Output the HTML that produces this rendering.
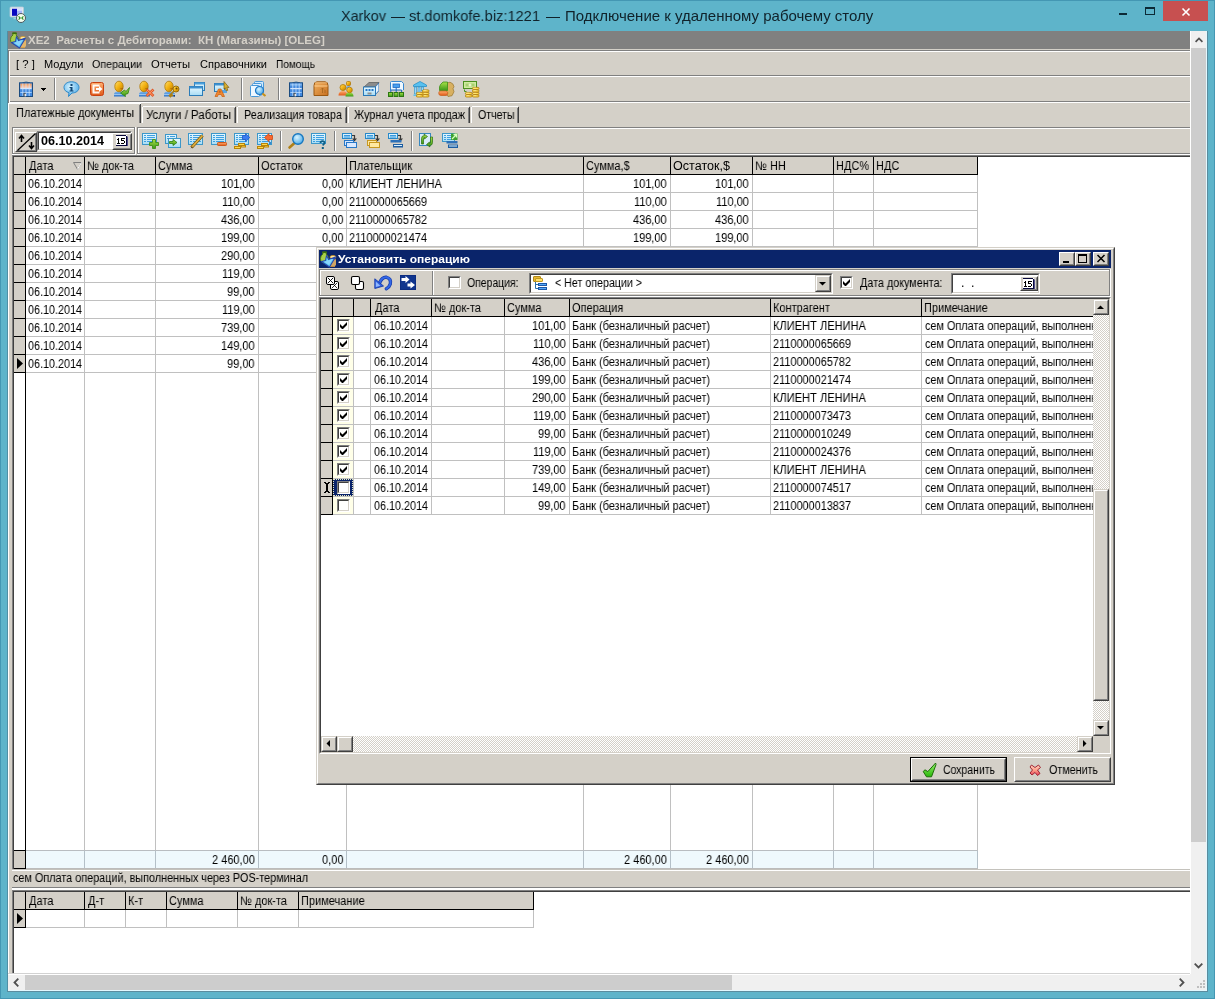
<!DOCTYPE html>
<html><head><meta charset="utf-8"><title>Xarkov</title>
<style>
html,body{margin:0;padding:0;}
body{width:1215px;height:999px;overflow:hidden;position:relative;background:#5eb4ca;font-family:"Liberation Sans",sans-serif;}
.a{position:absolute;}
.t{white-space:pre;will-change:transform;}
svg{display:block;overflow:visible}
</style></head><body>
<div class="a" style="left:0;top:0;width:1215px;height:999px;background:#5eb4ca"></div>
<div class="a " style="left:0px;top:0px;width:1px;height:999px;background:#4497b3;"></div>
<div class="a " style="left:1214px;top:0px;width:1px;height:999px;background:#4497b3;"></div>
<div class="a " style="left:0px;top:0px;width:1215px;height:1px;background:#4497b3;"></div>
<div class="a " style="left:0px;top:998px;width:1215px;height:1px;background:#4497b3;"></div>
<div class="a t" style="top:5.5px;height:20px;line-height:20px;font-size:15px;color:#10222a;left:341px;transform:scaleX(0.9639);transform-origin:0 0;">Xarkov</div>
<div class="a t" style="top:5.5px;height:20px;line-height:20px;font-size:15px;color:#10222a;left:390.5px;transform:scaleX(0.9000);transform-origin:0 0;">—</div>
<div class="a t" style="top:5.5px;height:20px;line-height:20px;font-size:15px;color:#10222a;left:409px;transform:scaleX(0.9756);transform-origin:0 0;">st.domkofe.biz:1221</div>
<div class="a t" style="top:5.5px;height:20px;line-height:20px;font-size:15px;color:#10222a;left:545.5px;transform:scaleX(0.9333);transform-origin:0 0;">—</div>
<div class="a t" style="top:5.5px;height:20px;line-height:20px;font-size:15px;color:#10222a;left:564.5px;">Подключение к удаленному рабочему столу</div>
<div class="a " style="left:1119px;top:13px;width:8px;height:2px;background:#0c2a36;"></div>
<div class="a " style="left:1145px;top:7px;width:10px;height:8px;border:1px solid #0c2a36;border-top-width:2px;box-sizing:border-box;"></div>
<div class="a " style="left:1163px;top:1px;width:45px;height:20px;background:#c75050;"></div>
<svg class="a" style="left:1182px;top:8px" width="8" height="8" viewBox="0 0 8 8"><path d="M0.5 0.5L7.5 7.5M7.5 0.5L0.5 7.5" stroke="#fff" stroke-width="1.6" fill="none"/></svg>
<svg class="a" style="left:9px;top:6px" width="18" height="18" viewBox="0 0 18 18"><rect x="1" y="1" width="13.500" height="10" rx="1" fill="#dfe8f0" stroke="#b8ccd8" stroke-width=".8"/><rect x="3" y="2.800" width="5" height="7" fill="#0808c0"/><rect x="8" y="2.800" width="5" height="7" fill="#a8b8f8"/><path d="M8 2.800h5v2h-5z" fill="#d8e0ff"/><path d="M4.500 12.500h4" stroke="#9cd0e0" stroke-width="1.500"/><circle cx="12" cy="12" r="4.500" fill="#f4fff0" stroke="#404850" stroke-width=".9"/><path d="M9.600 10.400l1.600 1.600-1.600 1.600M14.400 10.400l-1.600 1.600 1.600 1.600" stroke="#2c8c20" stroke-width="1.100" fill="none"/></svg>
<svg class="a" width="0" height="0" style="left:0;top:0"><defs>
<linearGradient id="gGold" x1="0" y1="0" x2="1" y2="1"><stop offset="0" stop-color="#ffe070"/><stop offset="0.5" stop-color="#f2b010"/><stop offset="1" stop-color="#b87800"/></linearGradient>
<linearGradient id="gBlue" x1="0" y1="0" x2="0" y2="1"><stop offset="0" stop-color="#7db8f0"/><stop offset="1" stop-color="#2f74c8"/></linearGradient>
<linearGradient id="gSky" x1="0" y1="0" x2="0" y2="1"><stop offset="0" stop-color="#e8f8ff"/><stop offset="1" stop-color="#a8dcf4"/></linearGradient>
<linearGradient id="gGreen" x1="0" y1="0" x2="0" y2="1"><stop offset="0" stop-color="#a8e048"/><stop offset="1" stop-color="#3c9818"/></linearGradient>
<linearGradient id="gOr" x1="0" y1="0" x2="0" y2="1"><stop offset="0" stop-color="#ffb070"/><stop offset="1" stop-color="#e05818"/></linearGradient>
<linearGradient id="gBox" x1="0" y1="0" x2="1" y2="1"><stop offset="0" stop-color="#f0b060"/><stop offset="1" stop-color="#c87020"/></linearGradient>
<linearGradient id="gBld" x1="0" y1="0" x2="0" y2="1"><stop offset="0" stop-color="#4a8cdc"/><stop offset="1" stop-color="#3f88e0"/></linearGradient><linearGradient id="gBldO" x1="0" y1="0" x2="0" y2="1"><stop offset="0" stop-color="#f09858"/><stop offset="1" stop-color="#f8d0c0"/></linearGradient><radialGradient id="gLens" cx="0.4" cy="0.35" r="0.7"><stop offset="0" stop-color="#d8f4ff"/><stop offset="1" stop-color="#48a8e8"/></radialGradient>
<linearGradient id="gChk" x1="0" y1="0" x2="0" y2="1"><stop offset="0" stop-color="#98f070"/><stop offset="1" stop-color="#28b808"/></linearGradient><linearGradient id="gX" x1="0" y1="0" x2="0" y2="1"><stop offset="0" stop-color="#ffd0c0"/><stop offset=".5" stop-color="#ffa088"/><stop offset="1" stop-color="#e03858"/></linearGradient></defs></svg>
<div class="a" id="desk" style="left:8px;top:31px;width:1182px;height:943px;background:#fff;overflow:hidden">
<div class="a " style="left:0px;top:0px;width:1182px;height:18px;background:#808080;"></div>
<div class="a t" style="top:2px;height:15px;line-height:15px;font-size:11px;color:#d4d0c8;font-weight:bold;left:20px;transform:scaleX(1.0470);transform-origin:0 0;">XE2  Расчеты с Дебиторами:  КН (Магазины) [OLEG]</div>
<svg class="a" style="left:2px;top:1px" width="16" height="16" viewBox="0 0 16 16"><path d="M2.500 1h4l-.5 2q2.500 1.500 2.500 5T5 12Q0.500 12 0.500 7.500 0.500 4.500 3 3z" fill="#a8d048" stroke="#4c7c10" stroke-width=".9"/><path d="M2.500 1.200h4" stroke="#386808" stroke-width="1.400"/><ellipse cx="13" cy="6" rx="3" ry="1.600" fill="#ffe9a0" stroke="#d89820" stroke-width=".7"/><path d="M10 9h6M10 11h6M10 13h6M10 15h5" stroke="#f0a838" stroke-width="1.300"/><path d="M10 10h6M10 12h6M10 14h6" stroke="#ffe0a0" stroke-width=".7"/><path d="M6.500 4.500L8.500 8.500 15.500 6 9.500 16 1.500 10.500 5.500 9.500z" fill="#58c8f0" stroke="#2848b0" stroke-width="1.100" stroke-linejoin="round"/><path d="M6.800 6.500L8 9.500 13 7.800 9 14 4 10.800 7 10z" fill="#a0d8ff" opacity=".7"/></svg>
<div class="a " style="left:0px;top:18px;width:1182px;height:106px;background:#d4d0c8;"></div>
<div class="a " style="left:0px;top:19px;width:1182px;height:1px;background:#808080;"></div>
<div class="a " style="left:0px;top:20px;width:1182px;height:1px;background:#ffffff;"></div>
<div class="a " style="left:0px;top:44px;width:1182px;height:1px;background:#808080;"></div>
<div class="a " style="left:0px;top:45px;width:1182px;height:1px;background:#ffffff;"></div>
<div class="a t" style="top:26px;height:14px;line-height:14px;font-size:11px;color:#000;left:8px;transform:scaleX(1.0340);transform-origin:0 0;">[ ? ]</div>
<div class="a t" style="top:26px;height:14px;line-height:14px;font-size:11px;color:#000;left:35.5px;transform:scaleX(0.9893);transform-origin:0 0;">Модули</div>
<div class="a t" style="top:26px;height:14px;line-height:14px;font-size:11px;color:#000;left:83.5px;transform:scaleX(0.9715);transform-origin:0 0;">Операции</div>
<div class="a t" style="top:26px;height:14px;line-height:14px;font-size:11px;color:#000;left:143px;transform:scaleX(1.0255);transform-origin:0 0;">Отчеты</div>
<div class="a t" style="top:26px;height:14px;line-height:14px;font-size:11px;color:#000;left:191.5px;transform:scaleX(1.0052);transform-origin:0 0;">Справочники</div>
<div class="a t" style="top:26px;height:14px;line-height:14px;font-size:11px;color:#000;left:268px;transform:scaleX(0.9176);transform-origin:0 0;">Помощь</div>
<div class="a " style="left:0px;top:70px;width:1182px;height:1px;background:#808080;"></div>
<div class="a " style="left:0px;top:71px;width:1182px;height:1px;background:#ffffff;"></div>
<div class="a " style="left:1px;top:21px;width:1px;height:23px;background:#ffffff;"></div>
<div class="a " style="left:1px;top:46px;width:1px;height:24px;background:#ffffff;"></div>
<div class="a " style="left:46px;top:47px;width:1px;height:22px;background:#808080;"></div>
<div class="a " style="left:47px;top:47px;width:1px;height:22px;background:#ffffff;"></div>
<div class="a " style="left:233px;top:47px;width:1px;height:22px;background:#808080;"></div>
<div class="a " style="left:234px;top:47px;width:1px;height:22px;background:#ffffff;"></div>
<div class="a " style="left:270px;top:47px;width:1px;height:22px;background:#808080;"></div>
<div class="a " style="left:271px;top:47px;width:1px;height:22px;background:#ffffff;"></div>
<div class="a " style="left:33px;top:57px;width:5px;height:1px;background:#000;"></div>
<div class="a " style="left:34px;top:58px;width:3px;height:1px;background:#000;"></div>
<div class="a " style="left:35px;top:59px;width:1px;height:1px;background:#000;"></div>
<svg class="a" style="left:10px;top:50px" width="16" height="16" viewBox="0 0 16 16"><rect x="1" y="1" width="14" height="15" rx="1" fill="#bfe4f8" opacity=".7"/><path d="M4.500 1.800Q8 0.200 12 1.800" stroke="#3c6c98" stroke-width="1" fill="none"/><rect x="1.500" y="1.800" width="13" height="13.700" fill="url(#gBld)" stroke="#1c4c80"/><rect x="2.300" y="2.600" width="11.400" height="4.400" fill="url(#gBldO)"/><rect x="2.300" y="7" width="11.400" height="1.200" fill="#eef4ff" opacity=".85"/><rect x="2.300" y="11" width="11.400" height="1" fill="#b8dcff" opacity=".8"/><path d="M4.800 2.500v12.500M8 2.500v12.500M11.200 2.500v12.500" stroke="#cfe6ff" stroke-width=".9" opacity=".8"/><rect x="5.400" y="11.800" width="2.200" height="3.500" fill="#505860"/><rect x="6.600" y="13" width="1.400" height="2.300" fill="#e8e8e8"/></svg><svg class="a" style="left:55px;top:50px" width="16" height="16" viewBox="0 0 16 16"><path d="M8.5 0.8C13 0.8 16 3.3 16 6.5S13 12 9 12L5.5 15.5 6 11.6C3 11 1 9 1 6.5 1 3.3 4 0.8 8.5 0.8z" fill="url(#gLens)" stroke="#2c88c8" stroke-width="1"/><rect x="7.5" y="3" width="2" height="2" fill="#104878"/><path d="M6.5 6h3v3.5h1v1h-4v-1h1v-2.5h-1z" fill="#104878"/></svg><svg class="a" style="left:80px;top:50px" width="16" height="16" viewBox="0 0 16 16"><rect x="2.5" y="1.5" width="13" height="13" rx="2" fill="url(#gOr)" stroke="#c84010"/><path d="M4.5 3.5h7v2h-5v5h5v2h-7z" fill="#fff" opacity=".95"/><path d="M8 7h3V5l3.5 3L11 11V9H8z" fill="#fff"/></svg><svg class="a" style="left:105px;top:50px" width="17" height="16" viewBox="0 0 17 16"><path d="M1 15.5v-2q0-3 4-3h3q4 0 4 3v2z" fill="url(#gBlue)"/><path d="M1 13h11v1h-11z" fill="#b8d8f8" opacity=".7"/><ellipse cx="6" cy="5.5" rx="4.2" ry="5.3" fill="url(#gGold)" stroke="#b07808" stroke-width="0.8"/><path d="M7.5 7.5q1.5 1 2.5 -.5" stroke="#a05800" stroke-width=".8" fill="none"/><path d="M16.5 6.5L13 10.5 11.5 9 7.5 12 12.5 15.5 12 13.5 15 12.5z" fill="url(#gGreen)" stroke="#2c8010" stroke-width=".8"/></svg><svg class="a" style="left:130px;top:50px" width="17" height="16" viewBox="0 0 17 16"><path d="M1 15.5v-2q0-3 4-3h3q4 0 4 3v2z" fill="url(#gBlue)"/><path d="M1 13h11v1h-11z" fill="#b8d8f8" opacity=".7"/><ellipse cx="6" cy="5.5" rx="4.2" ry="5.3" fill="url(#gGold)" stroke="#b07808" stroke-width="0.8"/><path d="M7.5 7.5q1.5 1 2.5 -.5" stroke="#a05800" stroke-width=".8" fill="none"/><path d="M8.5 8.5L15.5 15M15.5 8.5L8.5 15" stroke="#e05828" stroke-width="2.6"/><path d="M9 9L15 14.5M15 9L9 14.5" stroke="#ff9a68" stroke-width="1"/></svg><svg class="a" style="left:155px;top:50px" width="17" height="16" viewBox="0 0 17 16"><path d="M1 15.5v-2q0-3 4-3h3q4 0 4 3v2z" fill="url(#gBlue)"/><path d="M1 13h11v1h-11z" fill="#b8d8f8" opacity=".7"/><ellipse cx="6" cy="5.5" rx="4.2" ry="5.3" fill="url(#gGold)" stroke="#b07808" stroke-width="0.8"/><path d="M7.5 7.5q1.5 1 2.5 -.5" stroke="#a05800" stroke-width=".8" fill="none"/><circle cx="13" cy="8" r="3" fill="url(#gGold)" stroke="#98700c"/><circle cx="13.5" cy="7.5" r="1" fill="#6a4a00"/><path d="M11 10L6.5 14.5l1 1L9 14l1 1" stroke="#b08010" stroke-width="1.6" fill="none"/><rect x="10.5" y="14" width="1.5" height="1.5" fill="#183878"/></svg><svg class="a" style="left:180px;top:50px" width="18" height="16" viewBox="0 0 18 16"><rect x="6.5" y="1.5" width="10" height="8" fill="url(#gSky)" stroke="#2c7cb8"/><rect x="6.5" y="1.5" width="10" height="2" fill="#4aa0dc"/><rect x="1.5" y="5.5" width="13" height="9" fill="url(#gSky)" stroke="#2c7cb8"/><rect x="1.5" y="5.5" width="13" height="2" fill="#3c90d0"/></svg><svg class="a" style="left:205px;top:50px" width="17" height="16" viewBox="0 0 17 16"><rect x="1.5" y="2.5" width="10" height="8" fill="url(#gSky)" stroke="#2c7cb8"/><rect x="1.5" y="2.5" width="10" height="2" fill="#3c90d0"/><rect x="9" y="9" width="5" height="3" fill="#58a8e8"/><path d="M2 15.5L5.5 8h2.5L11.5 15.5H9L8.3 13.5H5.2L4.5 15.5zM6 11.5h1.6L6.8 9.5z" fill="#f08830" stroke="#c85c10" stroke-width=".7"/><path d="M11 0.5L16 6.5 13.8 6.3 14.8 9.3 13.2 9.8 12.2 6.8 11 8z" fill="#d8b030" stroke="#806010" stroke-width=".7"/></svg><svg class="a" style="left:242px;top:50px" width="16" height="16" viewBox="0 0 16 16"><rect x="4.500" y="0.5" width="9" height="12" rx="1" fill="#cfeaff" stroke="#4898d8"/><rect x="2.500" y="2.500" width="9" height="12" rx="1" fill="#dff0ff" stroke="#4898d8"/><rect x="0.500" y="4.500" width="9" height="11" rx="1" fill="#eef8ff" stroke="#4898d8"/><circle cx="9.5" cy="9.5" r="4" fill="url(#gLens)" stroke="#1c78c8" stroke-width="1.2"/><path d="M12.5 12.5L15.5 15" stroke="#c89018" stroke-width="2"/></svg><svg class="a" style="left:280px;top:50px" width="16" height="16" viewBox="0 0 16 16"><rect x="1" y="1" width="14" height="15" rx="1" fill="#bfe4f8" opacity=".7"/><path d="M4.500 1.800Q8 0.200 12 1.800" stroke="#3c6c98" stroke-width="1" fill="none"/><rect x="1.500" y="1.800" width="13" height="13.700" fill="url(#gBld)" stroke="#1c4c80"/><rect x="2.300" y="2.600" width="11.400" height="2" fill="#8cc0f4" opacity=".8"/><rect x="2.300" y="7" width="11.400" height="1.200" fill="#eef4ff" opacity=".85"/><rect x="2.300" y="11" width="11.400" height="1" fill="#b8dcff" opacity=".8"/><path d="M4.800 2.500v12.500M8 2.500v12.500M11.200 2.500v12.500" stroke="#cfe6ff" stroke-width=".9" opacity=".8"/><rect x="5.400" y="11.800" width="2.200" height="3.500" fill="#505860"/><rect x="6.600" y="13" width="1.400" height="2.300" fill="#e8e8e8"/></svg><svg class="a" style="left:305px;top:50px" width="16" height="16" viewBox="0 0 16 16"><path d="M1 4.5Q1 0.8 4 0.8H12Q15 0.8 15 4.5V14.5H1z" fill="url(#gBox)" stroke="#9c5810"/><path d="M1.500 5h13" stroke="#ffd090" stroke-width="1"/><path d="M2 1.800h12" stroke="#ffd8a0" stroke-width="1" opacity=".6"/><path d="M9.500 7v5M8 8.500l1.500-1.500 1.500 1.500M12 9v3" stroke="#a86820" stroke-width=".9" fill="none"/></svg><svg class="a" style="left:330px;top:50px" width="16" height="16" viewBox="0 0 16 16"><rect x="8.5" y="0.5" width="4" height="4" rx="1" fill="url(#gGold)" stroke="#b07808" stroke-width=".8"/><path d="M8 7.500q0-2.500 2.500-2.500t2.500 2.500z" fill="#68a8e8"/><path d="M0.500 14.500q0-4.500 4.500-4.500t4.500 4.500z" fill="url(#gOr)"/><circle cx="5" cy="6.500" r="3" fill="url(#gGold)" stroke="#b07808" stroke-width=".8"/><path d="M7.500 15.500q0-4 4-4t4 4z" fill="url(#gGreen)"/><circle cx="11.500" cy="9" r="2.800" fill="url(#gGold)" stroke="#b07808" stroke-width=".8"/></svg><svg class="a" style="left:355px;top:50px" width="17" height="16" viewBox="0 0 17 16"><path d="M1 6L6 1.500H16L12 6z" fill="#8c8c8c" stroke="#585858" stroke-width=".7"/><path d="M12 6L16 1.500V10L12 14.500z" fill="#2c6cb0"/><path d="M12.500 6L15.500 2.800V9.500L12.500 13z" fill="#e8f4ff"/><rect x="0.500" y="6" width="12" height="8.500" fill="url(#gSky)" stroke="#2878b8"/><path d="M2.500 8h2v2h-2zM5.500 8h2v2h-2zM8.500 8h2v2h-2z" fill="#2878c8"/><rect x="4.500" y="11.500" width="4" height="2" fill="#909090"/></svg><svg class="a" style="left:380px;top:50px" width="16" height="16" viewBox="0 0 16 16"><path d="M2.500 9V1.500Q2.500 0.500 3.500 0.500H13.500L15.500 2.500V9" fill="#eef8ff" stroke="#3888d0"/><rect x="5" y="3" width="6.500" height="3.500" fill="#48a0f0" stroke="#1c68c0" stroke-width=".8"/><path d="M8.200 6.500v2.500M2.800 11V9h10.800v2M8.200 9v2" stroke="#1c68c0" stroke-width="1" fill="none"/><rect x="0.500" y="11.500" width="4" height="4" fill="url(#gGreen)" stroke="#2c7810"/><rect x="6" y="11.500" width="4" height="4" fill="url(#gGreen)" stroke="#2c7810"/><rect x="11.500" y="11.500" width="4" height="4" fill="url(#gGreen)" stroke="#2c7810"/></svg><svg class="a" style="left:405px;top:50px" width="16" height="16" viewBox="0 0 16 16"><path d="M0.500 4L7 0.500L13.500 4V5.500H0.500z" fill="#58c0f0" stroke="#2890c8" stroke-width=".8"/><path d="M1.500 6h2v7h-2zM5 6h2v7H5zM8.500 6h2v4h-2z" fill="#9cd8f8" stroke="#2890c8" stroke-width=".6"/><path d="M0.500 13.500h5v1.500h-5z" fill="#58c0f0"/><rect x="9.4" y="13.9" width="6.6" height="2.1" rx="1" fill="#ffd84a" stroke="#b07c08" stroke-width=".8"/><path d="M10.5 14.6h3" stroke="#fff2a8" stroke-width=".7"/><rect x="9.4" y="11.4" width="6.6" height="2.1" rx="1" fill="#ffd84a" stroke="#b07c08" stroke-width=".8"/><path d="M10.5 12.1h3" stroke="#fff2a8" stroke-width=".7"/><rect x="9.4" y="8.9" width="6.6" height="2.1" rx="1" fill="#ffd84a" stroke="#b07c08" stroke-width=".8"/><path d="M10.5 9.6h3" stroke="#fff2a8" stroke-width=".7"/><rect x="3.4" y="13.9" width="6.6" height="2.1" rx="1" fill="#ffd84a" stroke="#b07c08" stroke-width=".8"/><path d="M4.5 14.6h3" stroke="#fff2a8" stroke-width=".7"/><rect x="3.4" y="11.4" width="6.6" height="2.1" rx="1" fill="#ffd84a" stroke="#b07c08" stroke-width=".8"/><path d="M4.5 12.1h3" stroke="#fff2a8" stroke-width=".7"/></svg><svg class="a" style="left:430px;top:50px" width="16" height="16" viewBox="0 0 16 16"><path d="M9 2l3-.8q3.500 1 4 4.500l-1 2 1 3-2 4-4 .8-2-4z" fill="#d8b060" stroke="#98742c" stroke-width=".7"/><path d="M2.500 3.500L5 1H9.500V9.500H1.500V6z" fill="url(#gGreen)" stroke="#3c9018" stroke-width=".8"/><path d="M0.800 11.500Q0.800 10 3 10H8.500L10 12 8.500 14.500H3Q0.800 14.500 0.800 12.500z" fill="url(#gOr)" stroke="#c85c18" stroke-width=".7"/></svg><svg class="a" style="left:455px;top:50px" width="16" height="16" viewBox="0 0 16 16"><rect x="0.500" y="0.500" width="13" height="7" fill="#d0eca0" stroke="#4c9020"/><rect x="2.500" y="2.500" width="9" height="3" fill="#a8d070"/><circle cx="7" cy="4" r="1.500" fill="#e8f4c8"/><path d="M1.500 8.500v2h2" stroke="#4c9020" fill="none"/><rect x="9.4" y="13.9" width="6.6" height="2.1" rx="1" fill="#ffd84a" stroke="#b07c08" stroke-width=".8"/><path d="M10.5 14.6h3" stroke="#fff2a8" stroke-width=".7"/><rect x="9.4" y="11.4" width="6.6" height="2.1" rx="1" fill="#ffd84a" stroke="#b07c08" stroke-width=".8"/><path d="M10.5 12.1h3" stroke="#fff2a8" stroke-width=".7"/><rect x="9.4" y="8.9" width="6.6" height="2.1" rx="1" fill="#ffd84a" stroke="#b07c08" stroke-width=".8"/><path d="M10.5 9.6h3" stroke="#fff2a8" stroke-width=".7"/><rect x="9.4" y="6.4" width="6.6" height="2.1" rx="1" fill="#ffd84a" stroke="#b07c08" stroke-width=".8"/><path d="M10.5 7.1h3" stroke="#fff2a8" stroke-width=".7"/><rect x="2.4" y="13.9" width="6.6" height="2.1" rx="1" fill="#ffd84a" stroke="#b07c08" stroke-width=".8"/><path d="M3.5 14.6h3" stroke="#fff2a8" stroke-width=".7"/><rect x="2.4" y="11.4" width="6.6" height="2.1" rx="1" fill="#ffd84a" stroke="#b07c08" stroke-width=".8"/><path d="M3.5 12.1h3" stroke="#fff2a8" stroke-width=".7"/></svg>
<div class="a " style="left:1px;top:72px;width:132px;height:1px;background:#ffffff;"></div>
<div class="a " style="left:0px;top:73px;width:1px;height:24px;background:#ffffff;"></div>
<div class="a " style="left:132px;top:73px;width:1px;height:19px;background:#404040;"></div>
<div class="a " style="left:131px;top:74px;width:1px;height:18px;background:#808080;"></div>
<div class="a t" style="top:74.67px;height:14px;line-height:14px;font-size:12.5px;color:#000;left:8px;transform:scaleX(0.8863);transform-origin:0 0;">Платежные документы</div>
<div class="a " style="left:135px;top:75px;width:92px;height:1px;background:#ffffff;"></div>
<div class="a " style="left:134px;top:76px;width:1px;height:16px;background:#ffffff;"></div>
<div class="a " style="left:227px;top:76px;width:1px;height:16px;background:#404040;"></div>
<div class="a " style="left:226px;top:77px;width:1px;height:15px;background:#808080;"></div>
<div class="a t" style="top:76.67px;height:14px;line-height:14px;font-size:12.5px;color:#000;left:138px;transform:scaleX(0.9214);transform-origin:0 0;">Услуги / Работы</div>
<div class="a " style="left:230px;top:75px;width:108px;height:1px;background:#ffffff;"></div>
<div class="a " style="left:229px;top:76px;width:1px;height:16px;background:#ffffff;"></div>
<div class="a " style="left:338px;top:76px;width:1px;height:16px;background:#404040;"></div>
<div class="a " style="left:337px;top:77px;width:1px;height:15px;background:#808080;"></div>
<div class="a t" style="top:76.67px;height:14px;line-height:14px;font-size:12.5px;color:#000;left:235.5px;transform:scaleX(0.8677);transform-origin:0 0;">Реализация товара</div>
<div class="a " style="left:341px;top:75px;width:120px;height:1px;background:#ffffff;"></div>
<div class="a " style="left:340px;top:76px;width:1px;height:16px;background:#ffffff;"></div>
<div class="a " style="left:461px;top:76px;width:1px;height:16px;background:#404040;"></div>
<div class="a " style="left:460px;top:77px;width:1px;height:15px;background:#808080;"></div>
<div class="a t" style="top:76.67px;height:14px;line-height:14px;font-size:12.5px;color:#000;left:346px;transform:scaleX(0.8713);transform-origin:0 0;">Журнал учета продаж</div>
<div class="a " style="left:464px;top:75px;width:46px;height:1px;background:#ffffff;"></div>
<div class="a " style="left:463px;top:76px;width:1px;height:16px;background:#ffffff;"></div>
<div class="a " style="left:510px;top:76px;width:1px;height:16px;background:#404040;"></div>
<div class="a " style="left:509px;top:77px;width:1px;height:15px;background:#808080;"></div>
<div class="a t" style="top:76.67px;height:14px;line-height:14px;font-size:12.5px;color:#000;left:469.5px;transform:scaleX(0.8452);transform-origin:0 0;">Отчеты</div>
<div class="a " style="left:4px;top:96px;width:124px;height:1px;background:#808080;"></div>
<div class="a " style="left:4px;top:96px;width:1px;height:28px;background:#808080;"></div>
<div class="a " style="left:5px;top:97px;width:122px;height:1px;background:#ffffff;"></div>
<div class="a " style="left:5px;top:97px;width:1px;height:26px;background:#ffffff;"></div>
<div class="a " style="left:4px;top:123px;width:124px;height:1px;background:#ffffff;"></div>
<div class="a " style="left:127px;top:96px;width:1px;height:28px;background:#ffffff;"></div>
<div class="a " style="left:5px;top:122px;width:122px;height:1px;background:#808080;"></div>
<div class="a " style="left:126px;top:97px;width:1px;height:26px;background:#808080;"></div>
<div class="a " style="left:129px;top:96px;width:1053px;height:1px;background:#808080;"></div>
<div class="a " style="left:129px;top:96px;width:1px;height:28px;background:#808080;"></div>
<div class="a " style="left:130px;top:97px;width:1052px;height:1px;background:#ffffff;"></div>
<div class="a " style="left:130px;top:97px;width:1px;height:26px;background:#ffffff;"></div>
<div class="a " style="left:129px;top:123px;width:1053px;height:1px;background:#ffffff;"></div>
<div class="a " style="left:130px;top:122px;width:1052px;height:1px;background:#808080;"></div>
<div class="a " style="left:7px;top:101px;width:22px;height:20px;background:#d4d0c8;box-sizing:border-box;border:1px solid;border-color:#fff #404040 #404040 #fff;"></div>
<div class="a " style="left:8px;top:102px;width:20px;height:18px;box-sizing:border-box;border:1px solid;border-color:#d4d0c8 #808080 #808080 #d4d0c8;"></div>
<svg class="a" style="left:7px;top:101px" width="22" height="20"><path d="M2.5 18.5L20.5 1.5" stroke="#000" stroke-width="1.2"/><path d="M6.5 4v6M4 6.5L6.5 3.5L9 6.5" stroke="#000" stroke-width="1.6" fill="none"/><path d="M16.5 10v6M14 13.5L16.5 16.5L19 13.5" stroke="#000" stroke-width="1.6" fill="none"/></svg>
<div class="a " style="left:29px;top:100px;width:95px;height:20px;background:#fff;box-sizing:border-box;border:1px solid;border-color:#808080 #fff #fff #808080;"></div>
<div class="a " style="left:30px;top:101px;width:93px;height:18px;box-sizing:border-box;border:1px solid;border-color:#404040 #d4d0c8 #d4d0c8 #404040;"></div>
<div class="a t" style="top:103px;height:14px;line-height:14px;font-size:12.5px;color:#000;font-weight:bold;left:33px;transform:scaleX(1.0070);transform-origin:0 0;">06.10.2014</div>
<div class="a " style="left:104px;top:102px;width:20px;height:17px;background:#d4d0c8;box-sizing:border-box;border:1px solid;border-color:#fff #404040 #404040 #fff;"></div>
<div class="a " style="left:105px;top:103px;width:18px;height:15px;box-sizing:border-box;border:1px solid;border-color:#d4d0c8 #808080 #808080 #d4d0c8;"></div>
<svg class="a" style="left:108px;top:104px" width="12" height="12" viewBox="0 0 12 12"><rect x="0" y="0" width="11" height="11" fill="#fff"/><path d="M0 0.500h10M10.500 1v10M0 10.500h11" stroke="#08083c" stroke-width="1" fill="none"/><path d="M11.500 1.500v9.500" stroke="#50508c" stroke-width="1"/><g fill="#000"><rect x="2" y="3" width="1" height="1"/><rect x="1" y="4" width="1" height="1"/><rect x="2" y="4" width="1" height="1"/><rect x="2" y="5" width="1" height="1"/><rect x="2" y="6" width="1" height="1"/><rect x="2" y="7" width="1" height="1"/><rect x="1" y="8" width="1" height="1"/><rect x="2" y="8" width="1" height="1"/><rect x="3" y="8" width="1" height="1"/><rect x="5" y="3" width="1" height="1"/><rect x="6" y="3" width="1" height="1"/><rect x="7" y="3" width="1" height="1"/><rect x="8" y="3" width="1" height="1"/><rect x="5" y="4" width="1" height="1"/><rect x="5" y="5" width="1" height="1"/><rect x="6" y="5" width="1" height="1"/><rect x="7" y="5" width="1" height="1"/><rect x="8" y="6" width="1" height="1"/><rect x="8" y="7" width="1" height="1"/><rect x="5" y="8" width="1" height="1"/><rect x="6" y="8" width="1" height="1"/><rect x="7" y="8" width="1" height="1"/></g></svg>
<div class="a " style="left:272px;top:100px;width:1px;height:20px;background:#808080;"></div>
<div class="a " style="left:273px;top:100px;width:1px;height:20px;background:#ffffff;"></div>
<div class="a " style="left:326px;top:100px;width:1px;height:20px;background:#808080;"></div>
<div class="a " style="left:327px;top:100px;width:1px;height:20px;background:#ffffff;"></div>
<div class="a " style="left:403px;top:100px;width:1px;height:20px;background:#808080;"></div>
<div class="a " style="left:404px;top:100px;width:1px;height:20px;background:#ffffff;"></div>
<svg class="a" style="left:134px;top:102px" width="17" height="17" viewBox="0 0 17 17"><rect x="0.5" y="0.5" width="14" height="11" fill="url(#gSky)" stroke="#3d97c9"/><path d="M2 2.5h2M5 2.5h8" stroke="#3f9fe0" stroke-width="1"/><path d="M2 4.5h2M5 4.5h8" stroke="#3f9fe0" stroke-width="1"/><path d="M2 6.5h2M5 6.5h8" stroke="#3f9fe0" stroke-width="1"/><path d="M2 8.5h2M5 8.5h8" stroke="#3f9fe0" stroke-width="1"/><path d="M10.500 6.500h3v3h3v3h-3v3h-3v-3h-3v-3h3z" fill="url(#gGreen)" stroke="#3c9018" stroke-width=".9"/></svg><svg class="a" style="left:157px;top:102px" width="17" height="17" viewBox="0 0 17 17"><rect x="0.5" y="1.5" width="11" height="9" fill="url(#gSky)" stroke="#3d97c9"/><path d="M2 3.5h2M5 3.5h5" stroke="#3f9fe0" stroke-width="1"/><path d="M2 5.5h2M5 5.5h5" stroke="#3f9fe0" stroke-width="1"/><rect x="3.5" y="5.5" width="12" height="9" fill="url(#gSky)" stroke="#3d97c9"/><path d="M4.500 8.500h3.500V6.500L12 9.500 8 12.500V10.500H4.500z" fill="url(#gGreen)" stroke="#2c8010" stroke-width=".8"/></svg><svg class="a" style="left:180px;top:102px" width="17" height="17" viewBox="0 0 17 17"><rect x="0.5" y="0.5" width="14" height="11" fill="url(#gSky)" stroke="#3d97c9"/><path d="M2 2.5h2M5 2.5h8" stroke="#3f9fe0" stroke-width="1"/><path d="M2 4.5h2M5 4.5h8" stroke="#3f9fe0" stroke-width="1"/><path d="M2 6.5h2M5 6.5h8" stroke="#3f9fe0" stroke-width="1"/><path d="M2 8.5h2M5 8.5h8" stroke="#3f9fe0" stroke-width="1"/><path d="M14.500 2.500L3.500 14.500" stroke="#7a5a10" stroke-width="3.200"/><path d="M14.500 2.500L4 14" stroke="#e0b040" stroke-width="1.800"/><path d="M2.500 15.500l1.500-2 .8.800z" fill="#403020"/></svg><svg class="a" style="left:203px;top:102px" width="17" height="17" viewBox="0 0 17 17"><rect x="0.5" y="0.5" width="14" height="11" fill="url(#gSky)" stroke="#3d97c9"/><path d="M2 2.5h2M5 2.5h8" stroke="#3f9fe0" stroke-width="1"/><path d="M2 4.5h2M5 4.5h8" stroke="#3f9fe0" stroke-width="1"/><path d="M2 6.5h2M5 6.5h8" stroke="#3f9fe0" stroke-width="1"/><path d="M2 8.5h2M5 8.5h8" stroke="#3f9fe0" stroke-width="1"/><rect x="6.500" y="9.500" width="9" height="3" rx=".8" fill="url(#gOr)" stroke="#d05818"/></svg><svg class="a" style="left:226px;top:102px" width="17" height="17" viewBox="0 0 17 17"><rect x="0.5" y="0.5" width="14" height="11" fill="url(#gSky)" stroke="#3d97c9"/><path d="M2 2.5h2M5 2.5h8" stroke="#3f9fe0" stroke-width="1"/><path d="M2 4.5h2M5 4.5h8" stroke="#3f9fe0" stroke-width="1"/><path d="M2 6.5h2M5 6.5h8" stroke="#3f9fe0" stroke-width="1"/><path d="M2 8.5h2M5 8.5h8" stroke="#3f9fe0" stroke-width="1"/><path d="M8.500 2.500h3V0.500L15.800 4.500 11.500 8.500V6.500h-3z" fill="#3c7cf0" stroke="#2058c8" stroke-width=".8"/><rect x="4.500" y="10.500" width="6" height="2" fill="#ffd84a" stroke="#b88408"/><rect x="0.500" y="13.500" width="6" height="2" fill="#ffd84a" stroke="#b88408"/><rect x="7.500" y="12.500" width="4" height="1.500" fill="#ffd84a" stroke="#b88408"/></svg><svg class="a" style="left:249px;top:102px" width="17" height="17" viewBox="0 0 17 17"><rect x="0.5" y="0.5" width="14" height="11" fill="url(#gSky)" stroke="#3d97c9"/><path d="M2 2.5h2M5 2.5h8" stroke="#3f9fe0" stroke-width="1"/><path d="M2 4.5h2M5 4.5h8" stroke="#3f9fe0" stroke-width="1"/><path d="M2 6.5h2M5 6.5h8" stroke="#3f9fe0" stroke-width="1"/><path d="M2 8.5h2M5 8.5h8" stroke="#3f9fe0" stroke-width="1"/><path d="M15.500 2.500h-3.500V0.500L7.500 4.500 12 8.500V6.500h3.500z" fill="#f86830" stroke="#d04810" stroke-width=".8"/><rect x="4.500" y="10.500" width="6" height="2" fill="#ffd84a" stroke="#b88408"/><rect x="0.500" y="13.500" width="6" height="2" fill="#ffd84a" stroke="#b88408"/><rect x="7.500" y="12.500" width="4" height="1.500" fill="#ffd84a" stroke="#b88408"/><rect x="12" y="9" width="2" height="2" fill="#3888d0"/></svg><svg class="a" style="left:280px;top:102px" width="17" height="17" viewBox="0 0 17 17"><path d="M6 10.500L1.500 14.500" stroke="#b08018" stroke-width="2.600" stroke-linecap="round"/><circle cx="10" cy="6" r="5.300" fill="url(#gLens)" stroke="#1878c0" stroke-width="1.400"/></svg><svg class="a" style="left:303px;top:102px" width="17" height="17" viewBox="0 0 17 17"><rect x="0.5" y="0.5" width="14" height="10" fill="url(#gSky)" stroke="#3d97c9"/><path d="M2 2.5h2M5 2.5h8" stroke="#3f9fe0" stroke-width="1"/><path d="M2 4.5h2M5 4.5h8" stroke="#3f9fe0" stroke-width="1"/><path d="M2 6.5h2M5 6.5h8" stroke="#3f9fe0" stroke-width="1"/><path d="M2 8.5h2M5 8.5h8" stroke="#3f9fe0" stroke-width="1"/><path d="M9.500 10q0-1.800 2-1.800t2 1.600q0 1-1.200 1.700l-.3 1" stroke="#106088" stroke-width="1.800" fill="none"/><rect x="10.800" y="14" width="2" height="2" fill="#106088"/></svg><svg class="a" style="left:334px;top:102px" width="17" height="17" viewBox="0 0 17 17"><rect x="0.500" y="0.500" width="9" height="5" fill="url(#gSky)" stroke="#2888c8"/><path d="M2 2.500h6M2 4h6" stroke="#3898e0" stroke-width="1"/><path d="M10 2.500h2.500V6" stroke="#383838" stroke-width="1.200" fill="none"/><path d="M10 5.500h5L12.500 8.500z" fill="#383838"/><rect x="2.500" y="7.500" width="9" height="5" fill="#d8e8ff" stroke="#2878c8"/><rect x="4.500" y="9.500" width="10" height="5" fill="#d8e8ff" stroke="#2878c8"/></svg><svg class="a" style="left:357px;top:102px" width="17" height="17" viewBox="0 0 17 17"><rect x="0.500" y="0.500" width="9" height="5" fill="url(#gSky)" stroke="#2888c8"/><path d="M2 2.500h6M2 4h6" stroke="#3898e0" stroke-width="1"/><path d="M10 2.500h2.500V6" stroke="#383838" stroke-width="1.200" fill="none"/><path d="M10 5.500h5L12.500 8.500z" fill="#383838"/><rect x="2.500" y="7.500" width="9" height="5" fill="#ffe8a0" stroke="#c89820"/><rect x="4.500" y="9.500" width="10" height="5" fill="#ffe8a0" stroke="#c89820"/></svg><svg class="a" style="left:380px;top:102px" width="17" height="17" viewBox="0 0 17 17"><rect x="0.500" y="0.500" width="9" height="5" fill="url(#gSky)" stroke="#2888c8"/><path d="M2 2.500h6M2 4h6" stroke="#3898e0" stroke-width="1"/><path d="M10 2.500h2.500V6" stroke="#383838" stroke-width="1.200" fill="none"/><path d="M10 5.500h5L12.500 8.500z" fill="#383838"/><rect x="2.500" y="7" width="11" height="2.500" fill="#2c70b8"/><rect x="5" y="11" width="10" height="3.500" fill="#1c5ca0"/><path d="M6 12.500h8" stroke="#d8f0ff" stroke-width="1"/></svg><svg class="a" style="left:411px;top:102px" width="17" height="17" viewBox="0 0 17 17"><rect x="0.500" y="0.500" width="11" height="12" fill="#d8ecf8" stroke="#3888c0"/><path d="M2.500 11V5.500Q2.500 2.500 5.500 2.500L5 1 8.500 3.500 5.500 6 5.800 4.500Q4.500 4.500 4.500 6V11z" fill="url(#gGreen)" stroke="#286c10" stroke-width=".7"/><path d="M13.500 4v5.500q0 3-3 3l.5 1.500-3.500-2.500 3-2.500-.3 1.500q1.300 0 1.300-1.500V4z" fill="url(#gGreen)" stroke="#286c10" stroke-width=".7"/></svg><svg class="a" style="left:434px;top:102px" width="17" height="17" viewBox="0 0 17 17"><rect x="0.5" y="0.5" width="12" height="8" fill="url(#gSky)" stroke="#3d97c9"/><path d="M2 2.5h2M5 2.5h6" stroke="#3f9fe0" stroke-width="1"/><path d="M2 4.5h2M5 4.5h6" stroke="#3f9fe0" stroke-width="1"/><path d="M2 6.5h2M5 6.5h6" stroke="#3f9fe0" stroke-width="1"/><rect x="9" y="0.500" width="6.500" height="6.500" fill="#3ca030"/><path d="M10 6L14.500 1.500M11.500 1.500h3v3" stroke="#d8ffc0" stroke-width="1.300" fill="none"/><rect x="4.500" y="8" width="11" height="2.500" fill="#2c70b8"/><rect x="6" y="11.500" width="10" height="3.500" fill="#1c5ca0"/><path d="M7 13h8" stroke="#d8f0ff"/></svg>
<div class="a " style="left:4px;top:124px;width:1178px;height:714px;background:#fff;"></div>
<div class="a " style="left:4px;top:124px;width:1178px;height:1px;background:#808080;"></div>
<div class="a " style="left:5px;top:125px;width:1177px;height:1px;background:#404040;"></div>
<div class="a " style="left:4px;top:124px;width:1px;height:714px;background:#808080;"></div>
<div class="a " style="left:5px;top:125px;width:1px;height:713px;background:#404040;"></div>
<div class="a " style="left:6px;top:126px;width:963px;height:17px;background:#d4d0c8;"></div>
<div class="a " style="left:6px;top:143px;width:964px;height:1px;background:#000;"></div>
<div class="a " style="left:17px;top:126px;width:1px;height:18px;background:#000;"></div>
<div class="a " style="left:76px;top:126px;width:1px;height:18px;background:#000;"></div>
<div class="a " style="left:147px;top:126px;width:1px;height:18px;background:#000;"></div>
<div class="a " style="left:250px;top:126px;width:1px;height:18px;background:#000;"></div>
<div class="a " style="left:338px;top:126px;width:1px;height:18px;background:#000;"></div>
<div class="a " style="left:575px;top:126px;width:1px;height:18px;background:#000;"></div>
<div class="a " style="left:662px;top:126px;width:1px;height:18px;background:#000;"></div>
<div class="a " style="left:744px;top:126px;width:1px;height:18px;background:#000;"></div>
<div class="a " style="left:825px;top:126px;width:1px;height:18px;background:#000;"></div>
<div class="a " style="left:865px;top:126px;width:1px;height:18px;background:#000;"></div>
<div class="a " style="left:969px;top:126px;width:1px;height:18px;background:#000;"></div>
<div class="a t" style="top:127.67px;height:14px;line-height:14px;font-size:12.5px;color:#000;left:21px;transform:scaleX(0.8809);transform-origin:0 0;">Дата</div>
<div class="a t" style="top:127.67px;height:14px;line-height:14px;font-size:12.5px;color:#000;left:79px;transform:scaleX(0.8804);transform-origin:0 0;">№ док-та</div>
<div class="a t" style="top:127.67px;height:14px;line-height:14px;font-size:12.5px;color:#000;left:150px;transform:scaleX(0.8799);transform-origin:0 0;">Сумма</div>
<div class="a t" style="top:127.67px;height:14px;line-height:14px;font-size:12.5px;color:#000;left:253px;transform:scaleX(0.8979);transform-origin:0 0;">Остаток</div>
<div class="a t" style="top:127.67px;height:14px;line-height:14px;font-size:12.5px;color:#000;left:341px;transform:scaleX(0.8804);transform-origin:0 0;">Плательщик</div>
<div class="a t" style="top:127.67px;height:14px;line-height:14px;font-size:12.5px;color:#000;left:578px;transform:scaleX(0.8802);transform-origin:0 0;">Сумма,$</div>
<div class="a t" style="top:127.67px;height:14px;line-height:14px;font-size:12.5px;color:#000;left:665px;transform:scaleX(1.0063);transform-origin:0 0;">Остаток,$</div>
<div class="a t" style="top:127.67px;height:14px;line-height:14px;font-size:12.5px;color:#000;left:747px;transform:scaleX(0.8797);transform-origin:0 0;">№ НН</div>
<div class="a t" style="top:127.67px;height:14px;line-height:14px;font-size:12.5px;color:#000;left:828px;transform:scaleX(0.8796);transform-origin:0 0;">НДС%</div>
<div class="a t" style="top:127.67px;height:14px;line-height:14px;font-size:12.5px;color:#000;left:868px;transform:scaleX(0.8793);transform-origin:0 0;">НДС</div>
<svg class="a" style="left:65px;top:131px" width="9" height="9"><path d="M0.5 0.5h8L4.5 7.3z" fill="#d4d0c8" stroke="#808080" stroke-width="1"/><path d="M8.5 0.5L4.5 7.3" stroke="#fff" stroke-width="1"/></svg>
<div class="a " style="left:76px;top:144px;width:1px;height:676px;background:#c0c0c0;"></div>
<div class="a " style="left:147px;top:144px;width:1px;height:676px;background:#c0c0c0;"></div>
<div class="a " style="left:250px;top:144px;width:1px;height:676px;background:#c0c0c0;"></div>
<div class="a " style="left:338px;top:144px;width:1px;height:676px;background:#c0c0c0;"></div>
<div class="a " style="left:575px;top:144px;width:1px;height:676px;background:#c0c0c0;"></div>
<div class="a " style="left:662px;top:144px;width:1px;height:676px;background:#c0c0c0;"></div>
<div class="a " style="left:744px;top:144px;width:1px;height:676px;background:#c0c0c0;"></div>
<div class="a " style="left:825px;top:144px;width:1px;height:676px;background:#c0c0c0;"></div>
<div class="a " style="left:865px;top:144px;width:1px;height:676px;background:#c0c0c0;"></div>
<div class="a " style="left:969px;top:144px;width:1px;height:676px;background:#c0c0c0;"></div>
<div class="a " style="left:17px;top:144px;width:1px;height:694px;background:#000;"></div>
<div class="a " style="left:6px;top:144px;width:11px;height:197px;background:#d4d0c8;"></div>
<div class="a " style="left:18px;top:161px;width:952px;height:1px;background:#c0c0c0;"></div>
<div class="a " style="left:6px;top:161px;width:12px;height:1px;background:#000;"></div>
<div class="a t" style="top:145.67px;height:14px;line-height:14px;font-size:12.5px;color:#000;left:20px;transform:scaleX(0.8631);transform-origin:0 0;">06.10.2014</div>
<div class="a t" style="top:145.67px;height:14px;line-height:14px;font-size:12.5px;color:#000;left:213.312px;transform:scaleX(0.8811);transform-origin:0 0;">101,00</div>
<div class="a t" style="top:145.67px;height:14px;line-height:14px;font-size:12.5px;color:#000;left:313.562px;transform:scaleX(0.8812);transform-origin:0 0;">0,00</div>
<div class="a t" style="top:145.67px;height:14px;line-height:14px;font-size:12.5px;color:#000;left:341px;transform:scaleX(0.8866);transform-origin:0 0;">КЛИЕНТ ЛЕНИНА</div>
<div class="a t" style="top:145.67px;height:14px;line-height:14px;font-size:12.5px;color:#000;left:625.312px;transform:scaleX(0.8811);transform-origin:0 0;">101,00</div>
<div class="a t" style="top:145.67px;height:14px;line-height:14px;font-size:12.5px;color:#000;left:707.312px;transform:scaleX(0.8811);transform-origin:0 0;">101,00</div>
<div class="a " style="left:18px;top:179px;width:952px;height:1px;background:#c0c0c0;"></div>
<div class="a " style="left:6px;top:179px;width:12px;height:1px;background:#000;"></div>
<div class="a t" style="top:163.67px;height:14px;line-height:14px;font-size:12.5px;color:#000;left:20px;transform:scaleX(0.8631);transform-origin:0 0;">06.10.2014</div>
<div class="a t" style="top:163.67px;height:14px;line-height:14px;font-size:12.5px;color:#000;left:214.125px;transform:scaleX(0.8811);transform-origin:0 0;">110,00</div>
<div class="a t" style="top:163.67px;height:14px;line-height:14px;font-size:12.5px;color:#000;left:313.562px;transform:scaleX(0.8812);transform-origin:0 0;">0,00</div>
<div class="a t" style="top:163.67px;height:14px;line-height:14px;font-size:12.5px;color:#000;left:341px;transform:scaleX(0.8718);transform-origin:0 0;">2110000065669</div>
<div class="a t" style="top:163.67px;height:14px;line-height:14px;font-size:12.5px;color:#000;left:626.125px;transform:scaleX(0.8811);transform-origin:0 0;">110,00</div>
<div class="a t" style="top:163.67px;height:14px;line-height:14px;font-size:12.5px;color:#000;left:708.125px;transform:scaleX(0.8811);transform-origin:0 0;">110,00</div>
<div class="a " style="left:18px;top:197px;width:952px;height:1px;background:#c0c0c0;"></div>
<div class="a " style="left:6px;top:197px;width:12px;height:1px;background:#000;"></div>
<div class="a t" style="top:181.67px;height:14px;line-height:14px;font-size:12.5px;color:#000;left:20px;transform:scaleX(0.8631);transform-origin:0 0;">06.10.2014</div>
<div class="a t" style="top:181.67px;height:14px;line-height:14px;font-size:12.5px;color:#000;left:213.312px;transform:scaleX(0.8811);transform-origin:0 0;">436,00</div>
<div class="a t" style="top:181.67px;height:14px;line-height:14px;font-size:12.5px;color:#000;left:313.562px;transform:scaleX(0.8812);transform-origin:0 0;">0,00</div>
<div class="a t" style="top:181.67px;height:14px;line-height:14px;font-size:12.5px;color:#000;left:341px;transform:scaleX(0.8718);transform-origin:0 0;">2110000065782</div>
<div class="a t" style="top:181.67px;height:14px;line-height:14px;font-size:12.5px;color:#000;left:625.312px;transform:scaleX(0.8811);transform-origin:0 0;">436,00</div>
<div class="a t" style="top:181.67px;height:14px;line-height:14px;font-size:12.5px;color:#000;left:707.312px;transform:scaleX(0.8811);transform-origin:0 0;">436,00</div>
<div class="a " style="left:18px;top:215px;width:952px;height:1px;background:#c0c0c0;"></div>
<div class="a " style="left:6px;top:215px;width:12px;height:1px;background:#000;"></div>
<div class="a t" style="top:199.67px;height:14px;line-height:14px;font-size:12.5px;color:#000;left:20px;transform:scaleX(0.8631);transform-origin:0 0;">06.10.2014</div>
<div class="a t" style="top:199.67px;height:14px;line-height:14px;font-size:12.5px;color:#000;left:213.312px;transform:scaleX(0.8811);transform-origin:0 0;">199,00</div>
<div class="a t" style="top:199.67px;height:14px;line-height:14px;font-size:12.5px;color:#000;left:313.562px;transform:scaleX(0.8812);transform-origin:0 0;">0,00</div>
<div class="a t" style="top:199.67px;height:14px;line-height:14px;font-size:12.5px;color:#000;left:341px;transform:scaleX(0.8718);transform-origin:0 0;">2110000021474</div>
<div class="a t" style="top:199.67px;height:14px;line-height:14px;font-size:12.5px;color:#000;left:625.312px;transform:scaleX(0.8811);transform-origin:0 0;">199,00</div>
<div class="a t" style="top:199.67px;height:14px;line-height:14px;font-size:12.5px;color:#000;left:707.312px;transform:scaleX(0.8811);transform-origin:0 0;">199,00</div>
<div class="a " style="left:18px;top:233px;width:952px;height:1px;background:#c0c0c0;"></div>
<div class="a " style="left:6px;top:233px;width:12px;height:1px;background:#000;"></div>
<div class="a t" style="top:217.67px;height:14px;line-height:14px;font-size:12.5px;color:#000;left:20px;transform:scaleX(0.8631);transform-origin:0 0;">06.10.2014</div>
<div class="a t" style="top:217.67px;height:14px;line-height:14px;font-size:12.5px;color:#000;left:213.312px;transform:scaleX(0.8811);transform-origin:0 0;">290,00</div>
<div class="a " style="left:18px;top:251px;width:952px;height:1px;background:#c0c0c0;"></div>
<div class="a " style="left:6px;top:251px;width:12px;height:1px;background:#000;"></div>
<div class="a t" style="top:235.67px;height:14px;line-height:14px;font-size:12.5px;color:#000;left:20px;transform:scaleX(0.8631);transform-origin:0 0;">06.10.2014</div>
<div class="a t" style="top:235.67px;height:14px;line-height:14px;font-size:12.5px;color:#000;left:214.125px;transform:scaleX(0.8811);transform-origin:0 0;">119,00</div>
<div class="a " style="left:18px;top:269px;width:952px;height:1px;background:#c0c0c0;"></div>
<div class="a " style="left:6px;top:269px;width:12px;height:1px;background:#000;"></div>
<div class="a t" style="top:253.67px;height:14px;line-height:14px;font-size:12.5px;color:#000;left:20px;transform:scaleX(0.8631);transform-origin:0 0;">06.10.2014</div>
<div class="a t" style="top:253.67px;height:14px;line-height:14px;font-size:12.5px;color:#000;left:219.438px;transform:scaleX(0.8811);transform-origin:0 0;">99,00</div>
<div class="a " style="left:18px;top:287px;width:952px;height:1px;background:#c0c0c0;"></div>
<div class="a " style="left:6px;top:287px;width:12px;height:1px;background:#000;"></div>
<div class="a t" style="top:271.67px;height:14px;line-height:14px;font-size:12.5px;color:#000;left:20px;transform:scaleX(0.8631);transform-origin:0 0;">06.10.2014</div>
<div class="a t" style="top:271.67px;height:14px;line-height:14px;font-size:12.5px;color:#000;left:214.125px;transform:scaleX(0.8811);transform-origin:0 0;">119,00</div>
<div class="a " style="left:18px;top:305px;width:952px;height:1px;background:#c0c0c0;"></div>
<div class="a " style="left:6px;top:305px;width:12px;height:1px;background:#000;"></div>
<div class="a t" style="top:289.67px;height:14px;line-height:14px;font-size:12.5px;color:#000;left:20px;transform:scaleX(0.8631);transform-origin:0 0;">06.10.2014</div>
<div class="a t" style="top:289.67px;height:14px;line-height:14px;font-size:12.5px;color:#000;left:213.312px;transform:scaleX(0.8811);transform-origin:0 0;">739,00</div>
<div class="a " style="left:18px;top:323px;width:952px;height:1px;background:#c0c0c0;"></div>
<div class="a " style="left:6px;top:323px;width:12px;height:1px;background:#000;"></div>
<div class="a t" style="top:307.67px;height:14px;line-height:14px;font-size:12.5px;color:#000;left:20px;transform:scaleX(0.8631);transform-origin:0 0;">06.10.2014</div>
<div class="a t" style="top:307.67px;height:14px;line-height:14px;font-size:12.5px;color:#000;left:213.312px;transform:scaleX(0.8811);transform-origin:0 0;">149,00</div>
<div class="a " style="left:18px;top:341px;width:952px;height:1px;background:#c0c0c0;"></div>
<div class="a " style="left:6px;top:341px;width:12px;height:1px;background:#000;"></div>
<div class="a t" style="top:325.67px;height:14px;line-height:14px;font-size:12.5px;color:#000;left:20px;transform:scaleX(0.8631);transform-origin:0 0;">06.10.2014</div>
<div class="a t" style="top:325.67px;height:14px;line-height:14px;font-size:12.5px;color:#000;left:219.438px;transform:scaleX(0.8811);transform-origin:0 0;">99,00</div>
<svg class="a" style="left:9px;top:327px" width="6" height="11"><path d="M0 0L6 5.5L0 11z" fill="#000"/></svg>
<div class="a " style="left:18px;top:820px;width:952px;height:17px;background:#eff9fd;"></div>
<div class="a " style="left:18px;top:819px;width:952px;height:1px;background:#b9bdc1;"></div>
<div class="a " style="left:18px;top:837px;width:952px;height:1px;background:#bcbcbc;"></div>
<div class="a " style="left:76px;top:820px;width:1px;height:17px;background:#b4c0c8;"></div>
<div class="a " style="left:147px;top:820px;width:1px;height:17px;background:#b4c0c8;"></div>
<div class="a " style="left:250px;top:820px;width:1px;height:17px;background:#b4c0c8;"></div>
<div class="a " style="left:338px;top:820px;width:1px;height:17px;background:#b4c0c8;"></div>
<div class="a " style="left:575px;top:820px;width:1px;height:17px;background:#b4c0c8;"></div>
<div class="a " style="left:662px;top:820px;width:1px;height:17px;background:#b4c0c8;"></div>
<div class="a " style="left:744px;top:820px;width:1px;height:17px;background:#b4c0c8;"></div>
<div class="a " style="left:825px;top:820px;width:1px;height:17px;background:#b4c0c8;"></div>
<div class="a " style="left:865px;top:820px;width:1px;height:17px;background:#b4c0c8;"></div>
<div class="a " style="left:969px;top:820px;width:1px;height:17px;background:#b4c0c8;"></div>
<div class="a " style="left:6px;top:820px;width:11px;height:17px;background:#d4d0c8;"></div>
<div class="a " style="left:6px;top:819px;width:12px;height:1px;background:#000;"></div>
<div class="a " style="left:6px;top:837px;width:12px;height:1px;background:#000;"></div>
<div class="a t" style="top:821.67px;height:14px;line-height:14px;font-size:12.5px;color:#000;left:204.125px;transform:scaleX(0.8812);transform-origin:0 0;">2 460,00</div>
<div class="a t" style="top:821.67px;height:14px;line-height:14px;font-size:12.5px;color:#000;left:313.562px;transform:scaleX(0.8812);transform-origin:0 0;">0,00</div>
<div class="a t" style="top:821.67px;height:14px;line-height:14px;font-size:12.5px;color:#000;left:616.125px;transform:scaleX(0.8812);transform-origin:0 0;">2 460,00</div>
<div class="a t" style="top:821.67px;height:14px;line-height:14px;font-size:12.5px;color:#000;left:698.125px;transform:scaleX(0.8812);transform-origin:0 0;">2 460,00</div>
<div class="a " style="left:0px;top:838px;width:1182px;height:21px;background:#d4d0c8;"></div>
<div class="a " style="left:4px;top:838px;width:1178px;height:1px;background:#c4c2bc;"></div>
<div class="a " style="left:4px;top:839px;width:1178px;height:1px;background:#ffffff;"></div>
<div class="a t" style="top:839.67px;height:14px;line-height:14px;font-size:12.5px;color:#000;left:4.5px;transform:scaleX(0.8672);transform-origin:0 0;">сем Оплата операций, выполненных через POS-терминал</div>
<div class="a " style="left:4px;top:856px;width:1178px;height:1px;background:#808080;"></div>
<div class="a " style="left:4px;top:857px;width:1178px;height:1px;background:#ffffff;"></div>
<div class="a " style="left:4px;top:858px;width:1178px;height:1px;background:#ffffff;"></div>
<div class="a " style="left:4px;top:859px;width:1178px;height:84px;background:#fff;"></div>
<div class="a " style="left:4px;top:859px;width:1178px;height:1px;background:#808080;"></div>
<div class="a " style="left:5px;top:860px;width:1177px;height:1px;background:#404040;"></div>
<div class="a " style="left:4px;top:859px;width:1px;height:84px;background:#808080;"></div>
<div class="a " style="left:5px;top:860px;width:1px;height:83px;background:#404040;"></div>
<div class="a " style="left:6px;top:861px;width:519px;height:17px;background:#d4d0c8;"></div>
<div class="a " style="left:6px;top:878px;width:520px;height:1px;background:#000;"></div>
<div class="a " style="left:17px;top:861px;width:1px;height:18px;background:#000;"></div>
<div class="a " style="left:76px;top:861px;width:1px;height:18px;background:#000;"></div>
<div class="a " style="left:117px;top:861px;width:1px;height:18px;background:#000;"></div>
<div class="a " style="left:158px;top:861px;width:1px;height:18px;background:#000;"></div>
<div class="a " style="left:229px;top:861px;width:1px;height:18px;background:#000;"></div>
<div class="a " style="left:290px;top:861px;width:1px;height:18px;background:#000;"></div>
<div class="a " style="left:525px;top:861px;width:1px;height:18px;background:#000;"></div>
<div class="a t" style="top:862.67px;height:14px;line-height:14px;font-size:12.5px;color:#000;left:21px;transform:scaleX(0.8809);transform-origin:0 0;">Дата</div>
<div class="a t" style="top:862.67px;height:14px;line-height:14px;font-size:12.5px;color:#000;left:80px;transform:scaleX(0.8799);transform-origin:0 0;">Д-т</div>
<div class="a t" style="top:862.67px;height:14px;line-height:14px;font-size:12.5px;color:#000;left:120px;transform:scaleX(0.8798);transform-origin:0 0;">К-т</div>
<div class="a t" style="top:862.67px;height:14px;line-height:14px;font-size:12.5px;color:#000;left:161px;transform:scaleX(0.8799);transform-origin:0 0;">Сумма</div>
<div class="a t" style="top:862.67px;height:14px;line-height:14px;font-size:12.5px;color:#000;left:232px;transform:scaleX(0.8804);transform-origin:0 0;">№ док-та</div>
<div class="a t" style="top:862.67px;height:14px;line-height:14px;font-size:12.5px;color:#000;left:293px;transform:scaleX(0.8804);transform-origin:0 0;">Примечание</div>
<div class="a " style="left:6px;top:879px;width:11px;height:17px;background:#d4d0c8;"></div>
<div class="a " style="left:17px;top:879px;width:1px;height:18px;background:#000;"></div>
<div class="a " style="left:6px;top:896px;width:12px;height:1px;background:#000;"></div>
<div class="a " style="left:18px;top:896px;width:508px;height:1px;background:#c0c0c0;"></div>
<div class="a " style="left:76px;top:879px;width:1px;height:17px;background:#c0c0c0;"></div>
<div class="a " style="left:117px;top:879px;width:1px;height:17px;background:#c0c0c0;"></div>
<div class="a " style="left:158px;top:879px;width:1px;height:17px;background:#c0c0c0;"></div>
<div class="a " style="left:229px;top:879px;width:1px;height:17px;background:#c0c0c0;"></div>
<div class="a " style="left:290px;top:879px;width:1px;height:17px;background:#c0c0c0;"></div>
<div class="a " style="left:525px;top:879px;width:1px;height:17px;background:#c0c0c0;"></div>
<svg class="a" style="left:9px;top:882px" width="6" height="11"><path d="M0 0L6 5.5L0 11z" fill="#000"/></svg>
<div class="a " style="left:0px;top:19px;width:1px;height:53px;background:#808080;"></div>
<div class="a " style="left:1px;top:20px;width:1px;height:52px;background:#ffffff;"></div>
<div class="a " style="left:0px;top:72px;width:1px;height:871px;background:#ffffff;"></div>
<div class="a " style="left:1px;top:73px;width:3px;height:870px;background:#d4d0c8;"></div>
<div class="a " style="left:308px;top:216px;width:799px;height:538px;background:#d4d0c8;box-sizing:border-box;border:1px solid;border-color:#d4d0c8 #404040 #404040 #d4d0c8;"></div>
<div class="a " style="left:309px;top:217px;width:797px;height:536px;box-sizing:border-box;border:1px solid;border-color:#fff #808080 #808080 #fff;"></div>
<div class="a " style="left:311px;top:219px;width:792px;height:18px;background:#0a246a;"></div>
<div class="a t" style="top:221px;height:15px;line-height:15px;font-size:11px;color:#fff;font-weight:bold;left:330px;transform:scaleX(1.0895);transform-origin:0 0;">Установить операцию</div>
<svg class="a" style="left:312px;top:220px" width="16" height="16" viewBox="0 0 16 16"><path d="M2.500 1h4l-.5 2q2.500 1.500 2.500 5T5 12Q0.500 12 0.500 7.500 0.500 4.500 3 3z" fill="#a8d048" stroke="#4c7c10" stroke-width=".9"/><path d="M2.500 1.200h4" stroke="#386808" stroke-width="1.400"/><ellipse cx="13" cy="6" rx="3" ry="1.600" fill="#ffe9a0" stroke="#d89820" stroke-width=".7"/><path d="M10 9h6M10 11h6M10 13h6M10 15h5" stroke="#f0a838" stroke-width="1.300"/><path d="M10 10h6M10 12h6M10 14h6" stroke="#ffe0a0" stroke-width=".7"/><path d="M6.500 4.500L8.500 8.500 15.500 6 9.500 16 1.500 10.500 5.500 9.500z" fill="#58c8f0" stroke="#2848b0" stroke-width="1.100" stroke-linejoin="round"/><path d="M6.800 6.500L8 9.500 13 7.800 9 14 4 10.800 7 10z" fill="#a0d8ff" opacity=".7"/></svg>
<div class="a " style="left:1051px;top:221px;width:16px;height:14px;background:#d4d0c8;box-sizing:border-box;border:1px solid;border-color:#fff #404040 #404040 #fff;"></div>
<div class="a " style="left:1052px;top:222px;width:14px;height:12px;box-sizing:border-box;border:1px solid;border-color:#d4d0c8 #808080 #808080 #d4d0c8;"></div>
<div class="a " style="left:1067px;top:221px;width:16px;height:14px;background:#d4d0c8;box-sizing:border-box;border:1px solid;border-color:#fff #404040 #404040 #fff;"></div>
<div class="a " style="left:1068px;top:222px;width:14px;height:12px;box-sizing:border-box;border:1px solid;border-color:#d4d0c8 #808080 #808080 #d4d0c8;"></div>
<div class="a " style="left:1085px;top:221px;width:16px;height:14px;background:#d4d0c8;box-sizing:border-box;border:1px solid;border-color:#fff #404040 #404040 #fff;"></div>
<div class="a " style="left:1086px;top:222px;width:14px;height:12px;box-sizing:border-box;border:1px solid;border-color:#d4d0c8 #808080 #808080 #d4d0c8;"></div>
<div class="a " style="left:1055px;top:230px;width:6px;height:2px;background:#000;"></div>
<div class="a " style="left:1070px;top:223px;width:9px;height:9px;box-sizing:border-box;border:1px solid #000;border-top-width:2px;"></div>
<svg class="a" style="left:1089px;top:224px" width="8" height="7"><path d="M0.5 0L7.5 7M7.5 0L0.5 7" stroke="#000" stroke-width="1.5"/></svg>
<div class="a " style="left:311px;top:238px;width:792px;height:1px;background:#808080;"></div>
<div class="a " style="left:311px;top:239px;width:792px;height:1px;background:#ffffff;"></div>
<div class="a " style="left:311px;top:264px;width:792px;height:1px;background:#808080;"></div>
<div class="a " style="left:311px;top:265px;width:792px;height:1px;background:#ffffff;"></div>
<div class="a " style="left:311px;top:238px;width:1px;height:27px;background:#808080;"></div>
<div class="a " style="left:312px;top:239px;width:1px;height:25px;background:#ffffff;"></div>
<div class="a " style="left:1102px;top:238px;width:1px;height:27px;background:#ffffff;"></div>
<div class="a " style="left:1101px;top:239px;width:1px;height:25px;background:#808080;"></div>
<div class="a " style="left:424px;top:240px;width:1px;height:24px;background:#808080;"></div>
<div class="a " style="left:425px;top:240px;width:1px;height:24px;background:#ffffff;"></div>
<svg class="a" style="left:318px;top:245px" width="14" height="14" viewBox="0 0 14 14"><rect x="4.500" y="5.500" width="8" height="8" rx="1.500" fill="#fff" stroke="#000"/><path d="M6 7l5 5M11 7l-5 5" stroke="#000" stroke-width=".8"/><rect x="0.500" y="0.500" width="8" height="8" rx="1.500" fill="#fff" stroke="#000"/><path d="M2 2l5 5M7 2l-5 5" stroke="#000" stroke-width=".9"/></svg><svg class="a" style="left:343px;top:245px" width="14" height="14" viewBox="0 0 14 14"><rect x="4.500" y="5.500" width="8" height="8" rx="1.500" fill="#fff" stroke="#000" stroke-width="1.100"/><rect x="0.500" y="0.500" width="8" height="8" rx="1.500" fill="#fff" stroke="#000" stroke-width="1.100"/></svg><svg class="a" style="left:366px;top:244px" width="18" height="16" viewBox="0 0 18 16"><path d="M5.500 8Q8 1.800 12.500 2.300 17.500 3.500 16.300 9 15.300 12.300 12.300 13.800" stroke="#183ca8" stroke-width="3.400" fill="none" stroke-linecap="round"/><path d="M5.500 8Q8 1.800 12.500 2.300 17.500 3.500 16.300 9 15.300 12.300 12.300 13.800" stroke="#3468e8" stroke-width="2" fill="none" stroke-linecap="round"/><path d="M0.800 3.800L0.800 13.500 9.500 11z" fill="#3060e0" stroke="#183ca8" stroke-width=".9" stroke-linejoin="round"/><path d="M1.800 6.500v5.500l4.500-1.300z" fill="#90b8ff"/></svg><svg class="a" style="left:392px;top:244px" width="16" height="15" viewBox="0 0 16 15"><rect x="0" y="0" width="16" height="15" fill="#0c2c80"/><rect x="1" y="1" width="14" height="13" fill="#143c98" opacity=".6"/><path d="M1.500 3h4V1l4 3.500-4 3.500V6h-4z" fill="#fff"/><path d="M7.500 8.500h3v-2l4.500 3.500-4.500 3.500v-2h-3z" fill="#fff"/></svg>
<div class="a " style="left:440px;top:245px;width:13px;height:13px;background:#fff;box-sizing:border-box;border:1px solid;border-color:#808080 #fff #fff #808080;"></div>
<div class="a " style="left:441px;top:246px;width:11px;height:11px;box-sizing:border-box;border:1px solid;border-color:#404040 #d4d0c8 #d4d0c8 #404040;"></div>
<div class="a t" style="top:244.67px;height:14px;line-height:14px;font-size:12.5px;color:#000;left:458.5px;transform:scaleX(0.8344);transform-origin:0 0;">Операция:</div>
<div class="a " style="left:521px;top:242px;width:304px;height:21px;background:#fff;box-sizing:border-box;border:1px solid;border-color:#808080 #fff #fff #808080;"></div>
<div class="a " style="left:522px;top:243px;width:302px;height:19px;box-sizing:border-box;border:1px solid;border-color:#404040 #d4d0c8 #d4d0c8 #404040;"></div>
<div class="a t" style="top:244.67px;height:14px;line-height:14px;font-size:12.5px;color:#000;left:546.5px;transform:scaleX(0.8531);transform-origin:0 0;">&lt; Нет операции &gt;</div>
<svg class="a" style="left:525px;top:245px" width="14" height="14" viewBox="0 0 14 14"><rect x="0.500" y="0.500" width="7" height="5" rx=".5" fill="#e8b830" stroke="#b08818"/><rect x="2.500" y="2.500" width="7" height="3" rx=".5" fill="#ffe068" stroke="#c09820"/><path d="M2.500 6v6.500h3M2.500 8.500h3" stroke="#2c70a8" fill="none"/><rect x="5.500" y="7.500" width="8" height="2" fill="#58a8f8" stroke="#1c58a8"/><rect x="5.500" y="11.500" width="8" height="2" fill="#58a8f8" stroke="#1c58a8"/></svg>
<div class="a " style="left:807px;top:244px;width:16px;height:17px;background:#d4d0c8;box-sizing:border-box;border:1px solid;border-color:#d4d0c8 #404040 #404040 #d4d0c8;"></div>
<div class="a " style="left:808px;top:245px;width:14px;height:15px;box-sizing:border-box;border:1px solid;border-color:#fff #808080 #808080 #fff;"></div>
<svg class="a" style="left:811px;top:251px" width="7" height="4"><path d="M0 0h7L3.5 3.5z" fill="#000"/></svg>
<div class="a " style="left:832px;top:245px;width:13px;height:13px;background:#fff;box-sizing:border-box;border:1px solid;border-color:#808080 #fff #fff #808080;"></div>
<div class="a " style="left:833px;top:246px;width:11px;height:11px;box-sizing:border-box;border:1px solid;border-color:#404040 #d4d0c8 #d4d0c8 #404040;"></div>
<svg class="a" style="left:835px;top:248px" width="7" height="7"><path d="M0 2v3l2 2h1l4-4V0L2.5 4.5z" fill="#000"/></svg>
<div class="a t" style="top:244.67px;height:14px;line-height:14px;font-size:12.5px;color:#000;left:851.5px;transform:scaleX(0.8633);transform-origin:0 0;">Дата документа:</div>
<div class="a " style="left:943px;top:242px;width:89px;height:21px;background:#fff;box-sizing:border-box;border:1px solid;border-color:#808080 #fff #fff #808080;"></div>
<div class="a " style="left:944px;top:243px;width:87px;height:19px;box-sizing:border-box;border:1px solid;border-color:#404040 #d4d0c8 #d4d0c8 #404040;"></div>
<div class="a t" style="top:244.67px;height:14px;line-height:14px;font-size:12.5px;color:#000;left:953px;transform:scaleX(0.8829);transform-origin:0 0;">.</div>
<div class="a t" style="top:244.67px;height:14px;line-height:14px;font-size:12.5px;color:#000;left:962.5px;transform:scaleX(0.8829);transform-origin:0 0;">.</div>
<div class="a " style="left:1012px;top:245px;width:18px;height:15px;background:#d4d0c8;box-sizing:border-box;border:1px solid;border-color:#fff #404040 #404040 #fff;"></div>
<div class="a " style="left:1013px;top:246px;width:16px;height:13px;box-sizing:border-box;border:1px solid;border-color:#d4d0c8 #808080 #808080 #d4d0c8;"></div>
<svg class="a" style="left:1015px;top:247px" width="12" height="12" viewBox="0 0 12 12"><rect x="0" y="0" width="11" height="11" fill="#fff"/><path d="M0 0.500h10M10.500 1v10M0 10.500h11" stroke="#08083c" stroke-width="1" fill="none"/><path d="M11.500 1.500v9.500" stroke="#50508c" stroke-width="1"/><g fill="#000"><rect x="2" y="3" width="1" height="1"/><rect x="1" y="4" width="1" height="1"/><rect x="2" y="4" width="1" height="1"/><rect x="2" y="5" width="1" height="1"/><rect x="2" y="6" width="1" height="1"/><rect x="2" y="7" width="1" height="1"/><rect x="1" y="8" width="1" height="1"/><rect x="2" y="8" width="1" height="1"/><rect x="3" y="8" width="1" height="1"/><rect x="5" y="3" width="1" height="1"/><rect x="6" y="3" width="1" height="1"/><rect x="7" y="3" width="1" height="1"/><rect x="8" y="3" width="1" height="1"/><rect x="5" y="4" width="1" height="1"/><rect x="5" y="5" width="1" height="1"/><rect x="6" y="5" width="1" height="1"/><rect x="7" y="5" width="1" height="1"/><rect x="8" y="6" width="1" height="1"/><rect x="8" y="7" width="1" height="1"/><rect x="5" y="8" width="1" height="1"/><rect x="6" y="8" width="1" height="1"/><rect x="7" y="8" width="1" height="1"/></g></svg>
<div class="a " style="left:311px;top:266px;width:792px;height:457px;background:#fff;box-sizing:border-box;border:1px solid;border-color:#808080 #fff #fff #808080;"></div>
<div class="a " style="left:312px;top:267px;width:790px;height:455px;box-sizing:border-box;border:1px solid;border-color:#404040 #d4d0c8 #d4d0c8 #404040;"></div>
<div class="a " style="left:313px;top:268px;width:772px;height:17px;background:#d4d0c8;"></div>
<div class="a " style="left:313px;top:285px;width:772px;height:1px;background:#000;"></div>
<div class="a " style="left:324px;top:268px;width:1px;height:18px;background:#000;"></div>
<div class="a " style="left:345px;top:268px;width:1px;height:18px;background:#000;"></div>
<div class="a " style="left:362px;top:268px;width:1px;height:18px;background:#000;"></div>
<div class="a " style="left:423px;top:268px;width:1px;height:18px;background:#000;"></div>
<div class="a " style="left:496px;top:268px;width:1px;height:18px;background:#000;"></div>
<div class="a " style="left:561px;top:268px;width:1px;height:18px;background:#000;"></div>
<div class="a " style="left:762px;top:268px;width:1px;height:18px;background:#000;"></div>
<div class="a " style="left:913px;top:268px;width:1px;height:18px;background:#000;"></div>
<div class="a t" style="top:269.67px;height:14px;line-height:14px;font-size:12.5px;color:#000;left:367px;transform:scaleX(0.8809);transform-origin:0 0;">Дата</div>
<div class="a t" style="top:269.67px;height:14px;line-height:14px;font-size:12.5px;color:#000;left:426px;transform:scaleX(0.8804);transform-origin:0 0;">№ док-та</div>
<div class="a t" style="top:269.67px;height:14px;line-height:14px;font-size:12.5px;color:#000;left:499px;transform:scaleX(0.8799);transform-origin:0 0;">Сумма</div>
<div class="a t" style="top:269.67px;height:14px;line-height:14px;font-size:12.5px;color:#000;left:564px;transform:scaleX(0.8804);transform-origin:0 0;">Операция</div>
<div class="a t" style="top:269.67px;height:14px;line-height:14px;font-size:12.5px;color:#000;left:765px;transform:scaleX(0.8806);transform-origin:0 0;">Контрагент</div>
<div class="a t" style="top:269.67px;height:14px;line-height:14px;font-size:12.5px;color:#000;left:916px;transform:scaleX(0.8804);transform-origin:0 0;">Примечание</div>
<div class="a " style="left:313px;top:286px;width:11px;height:197px;background:#d4d0c8;"></div>
<div class="a " style="left:324px;top:286px;width:1px;height:198px;background:#000;"></div>
<div class="a" style="left:916px;top:286px;width:169px;height:198px;overflow:hidden">
<div class="a t" style="top:1.67px;height:14px;line-height:14px;font-size:12.5px;color:#000;left:0.5px;transform:scaleX(0.8683);transform-origin:0 0;">сем Оплата операций, выполненных через</div>
<div class="a t" style="top:19.67px;height:14px;line-height:14px;font-size:12.5px;color:#000;left:0.5px;transform:scaleX(0.8683);transform-origin:0 0;">сем Оплата операций, выполненных через</div>
<div class="a t" style="top:37.67px;height:14px;line-height:14px;font-size:12.5px;color:#000;left:0.5px;transform:scaleX(0.8683);transform-origin:0 0;">сем Оплата операций, выполненных через</div>
<div class="a t" style="top:55.67px;height:14px;line-height:14px;font-size:12.5px;color:#000;left:0.5px;transform:scaleX(0.8683);transform-origin:0 0;">сем Оплата операций, выполненных через</div>
<div class="a t" style="top:73.67px;height:14px;line-height:14px;font-size:12.5px;color:#000;left:0.5px;transform:scaleX(0.8683);transform-origin:0 0;">сем Оплата операций, выполненных через</div>
<div class="a t" style="top:91.67px;height:14px;line-height:14px;font-size:12.5px;color:#000;left:0.5px;transform:scaleX(0.8683);transform-origin:0 0;">сем Оплата операций, выполненных через</div>
<div class="a t" style="top:109.67px;height:14px;line-height:14px;font-size:12.5px;color:#000;left:0.5px;transform:scaleX(0.8683);transform-origin:0 0;">сем Оплата операций, выполненных через</div>
<div class="a t" style="top:127.67px;height:14px;line-height:14px;font-size:12.5px;color:#000;left:0.5px;transform:scaleX(0.8683);transform-origin:0 0;">сем Оплата операций, выполненных через</div>
<div class="a t" style="top:145.67px;height:14px;line-height:14px;font-size:12.5px;color:#000;left:0.5px;transform:scaleX(0.8683);transform-origin:0 0;">сем Оплата операций, выполненных через</div>
<div class="a t" style="top:163.67px;height:14px;line-height:14px;font-size:12.5px;color:#000;left:0.5px;transform:scaleX(0.8683);transform-origin:0 0;">сем Оплата операций, выполненных через</div>
<div class="a t" style="top:181.67px;height:14px;line-height:14px;font-size:12.5px;color:#000;left:0.5px;transform:scaleX(0.8683);transform-origin:0 0;">сем Оплата операций, выполненных через</div>
</div>
<div class="a " style="left:325px;top:286px;width:20px;height:17px;background:#ffffe8;"></div>
<div class="a " style="left:325px;top:303px;width:760px;height:1px;background:#c0c0c0;"></div>
<div class="a " style="left:313px;top:303px;width:12px;height:1px;background:#000;"></div>
<div class="a " style="left:345px;top:286px;width:1px;height:18px;background:#c0c0c0;"></div>
<div class="a " style="left:362px;top:286px;width:1px;height:18px;background:#c0c0c0;"></div>
<div class="a " style="left:423px;top:286px;width:1px;height:18px;background:#c0c0c0;"></div>
<div class="a " style="left:496px;top:286px;width:1px;height:18px;background:#c0c0c0;"></div>
<div class="a " style="left:561px;top:286px;width:1px;height:18px;background:#c0c0c0;"></div>
<div class="a " style="left:762px;top:286px;width:1px;height:18px;background:#c0c0c0;"></div>
<div class="a " style="left:913px;top:286px;width:1px;height:18px;background:#c0c0c0;"></div>
<div class="a " style="left:329px;top:288px;width:13px;height:13px;background:#fff;box-sizing:border-box;border:1px solid;border-color:#808080 #fff #fff #808080;"></div>
<div class="a " style="left:330px;top:289px;width:11px;height:11px;box-sizing:border-box;border:1px solid;border-color:#404040 #d4d0c8 #d4d0c8 #404040;"></div>
<svg class="a" style="left:332px;top:291px" width="7" height="7"><path d="M0 2v3l2 2h1l4-4V0L2.5 4.5z" fill="#000"/></svg>
<div class="a t" style="top:287.67px;height:14px;line-height:14px;font-size:12.5px;color:#000;left:366px;transform:scaleX(0.8631);transform-origin:0 0;">06.10.2014</div>
<div class="a t" style="top:287.67px;height:14px;line-height:14px;font-size:12.5px;color:#000;left:524.312px;transform:scaleX(0.8811);transform-origin:0 0;">101,00</div>
<div class="a t" style="top:287.67px;height:14px;line-height:14px;font-size:12.5px;color:#000;left:564.3px;transform:scaleX(0.8706);transform-origin:0 0;">Банк (безналичный расчет)</div>
<div class="a t" style="top:287.67px;height:14px;line-height:14px;font-size:12.5px;color:#000;left:765px;transform:scaleX(0.8866);transform-origin:0 0;">КЛИЕНТ ЛЕНИНА</div>
<div class="a " style="left:325px;top:304px;width:20px;height:17px;background:#ffffe8;"></div>
<div class="a " style="left:325px;top:321px;width:760px;height:1px;background:#c0c0c0;"></div>
<div class="a " style="left:313px;top:321px;width:12px;height:1px;background:#000;"></div>
<div class="a " style="left:345px;top:304px;width:1px;height:18px;background:#c0c0c0;"></div>
<div class="a " style="left:362px;top:304px;width:1px;height:18px;background:#c0c0c0;"></div>
<div class="a " style="left:423px;top:304px;width:1px;height:18px;background:#c0c0c0;"></div>
<div class="a " style="left:496px;top:304px;width:1px;height:18px;background:#c0c0c0;"></div>
<div class="a " style="left:561px;top:304px;width:1px;height:18px;background:#c0c0c0;"></div>
<div class="a " style="left:762px;top:304px;width:1px;height:18px;background:#c0c0c0;"></div>
<div class="a " style="left:913px;top:304px;width:1px;height:18px;background:#c0c0c0;"></div>
<div class="a " style="left:329px;top:306px;width:13px;height:13px;background:#fff;box-sizing:border-box;border:1px solid;border-color:#808080 #fff #fff #808080;"></div>
<div class="a " style="left:330px;top:307px;width:11px;height:11px;box-sizing:border-box;border:1px solid;border-color:#404040 #d4d0c8 #d4d0c8 #404040;"></div>
<svg class="a" style="left:332px;top:309px" width="7" height="7"><path d="M0 2v3l2 2h1l4-4V0L2.5 4.5z" fill="#000"/></svg>
<div class="a t" style="top:305.67px;height:14px;line-height:14px;font-size:12.5px;color:#000;left:366px;transform:scaleX(0.8631);transform-origin:0 0;">06.10.2014</div>
<div class="a t" style="top:305.67px;height:14px;line-height:14px;font-size:12.5px;color:#000;left:525.125px;transform:scaleX(0.8811);transform-origin:0 0;">110,00</div>
<div class="a t" style="top:305.67px;height:14px;line-height:14px;font-size:12.5px;color:#000;left:564.3px;transform:scaleX(0.8706);transform-origin:0 0;">Банк (безналичный расчет)</div>
<div class="a t" style="top:305.67px;height:14px;line-height:14px;font-size:12.5px;color:#000;left:765px;transform:scaleX(0.8718);transform-origin:0 0;">2110000065669</div>
<div class="a " style="left:325px;top:322px;width:20px;height:17px;background:#ffffe8;"></div>
<div class="a " style="left:325px;top:339px;width:760px;height:1px;background:#c0c0c0;"></div>
<div class="a " style="left:313px;top:339px;width:12px;height:1px;background:#000;"></div>
<div class="a " style="left:345px;top:322px;width:1px;height:18px;background:#c0c0c0;"></div>
<div class="a " style="left:362px;top:322px;width:1px;height:18px;background:#c0c0c0;"></div>
<div class="a " style="left:423px;top:322px;width:1px;height:18px;background:#c0c0c0;"></div>
<div class="a " style="left:496px;top:322px;width:1px;height:18px;background:#c0c0c0;"></div>
<div class="a " style="left:561px;top:322px;width:1px;height:18px;background:#c0c0c0;"></div>
<div class="a " style="left:762px;top:322px;width:1px;height:18px;background:#c0c0c0;"></div>
<div class="a " style="left:913px;top:322px;width:1px;height:18px;background:#c0c0c0;"></div>
<div class="a " style="left:329px;top:324px;width:13px;height:13px;background:#fff;box-sizing:border-box;border:1px solid;border-color:#808080 #fff #fff #808080;"></div>
<div class="a " style="left:330px;top:325px;width:11px;height:11px;box-sizing:border-box;border:1px solid;border-color:#404040 #d4d0c8 #d4d0c8 #404040;"></div>
<svg class="a" style="left:332px;top:327px" width="7" height="7"><path d="M0 2v3l2 2h1l4-4V0L2.5 4.5z" fill="#000"/></svg>
<div class="a t" style="top:323.67px;height:14px;line-height:14px;font-size:12.5px;color:#000;left:366px;transform:scaleX(0.8631);transform-origin:0 0;">06.10.2014</div>
<div class="a t" style="top:323.67px;height:14px;line-height:14px;font-size:12.5px;color:#000;left:524.312px;transform:scaleX(0.8811);transform-origin:0 0;">436,00</div>
<div class="a t" style="top:323.67px;height:14px;line-height:14px;font-size:12.5px;color:#000;left:564.3px;transform:scaleX(0.8706);transform-origin:0 0;">Банк (безналичный расчет)</div>
<div class="a t" style="top:323.67px;height:14px;line-height:14px;font-size:12.5px;color:#000;left:765px;transform:scaleX(0.8718);transform-origin:0 0;">2110000065782</div>
<div class="a " style="left:325px;top:340px;width:20px;height:17px;background:#ffffe8;"></div>
<div class="a " style="left:325px;top:357px;width:760px;height:1px;background:#c0c0c0;"></div>
<div class="a " style="left:313px;top:357px;width:12px;height:1px;background:#000;"></div>
<div class="a " style="left:345px;top:340px;width:1px;height:18px;background:#c0c0c0;"></div>
<div class="a " style="left:362px;top:340px;width:1px;height:18px;background:#c0c0c0;"></div>
<div class="a " style="left:423px;top:340px;width:1px;height:18px;background:#c0c0c0;"></div>
<div class="a " style="left:496px;top:340px;width:1px;height:18px;background:#c0c0c0;"></div>
<div class="a " style="left:561px;top:340px;width:1px;height:18px;background:#c0c0c0;"></div>
<div class="a " style="left:762px;top:340px;width:1px;height:18px;background:#c0c0c0;"></div>
<div class="a " style="left:913px;top:340px;width:1px;height:18px;background:#c0c0c0;"></div>
<div class="a " style="left:329px;top:342px;width:13px;height:13px;background:#fff;box-sizing:border-box;border:1px solid;border-color:#808080 #fff #fff #808080;"></div>
<div class="a " style="left:330px;top:343px;width:11px;height:11px;box-sizing:border-box;border:1px solid;border-color:#404040 #d4d0c8 #d4d0c8 #404040;"></div>
<svg class="a" style="left:332px;top:345px" width="7" height="7"><path d="M0 2v3l2 2h1l4-4V0L2.5 4.5z" fill="#000"/></svg>
<div class="a t" style="top:341.67px;height:14px;line-height:14px;font-size:12.5px;color:#000;left:366px;transform:scaleX(0.8631);transform-origin:0 0;">06.10.2014</div>
<div class="a t" style="top:341.67px;height:14px;line-height:14px;font-size:12.5px;color:#000;left:524.312px;transform:scaleX(0.8811);transform-origin:0 0;">199,00</div>
<div class="a t" style="top:341.67px;height:14px;line-height:14px;font-size:12.5px;color:#000;left:564.3px;transform:scaleX(0.8706);transform-origin:0 0;">Банк (безналичный расчет)</div>
<div class="a t" style="top:341.67px;height:14px;line-height:14px;font-size:12.5px;color:#000;left:765px;transform:scaleX(0.8718);transform-origin:0 0;">2110000021474</div>
<div class="a " style="left:325px;top:358px;width:20px;height:17px;background:#ffffe8;"></div>
<div class="a " style="left:325px;top:375px;width:760px;height:1px;background:#c0c0c0;"></div>
<div class="a " style="left:313px;top:375px;width:12px;height:1px;background:#000;"></div>
<div class="a " style="left:345px;top:358px;width:1px;height:18px;background:#c0c0c0;"></div>
<div class="a " style="left:362px;top:358px;width:1px;height:18px;background:#c0c0c0;"></div>
<div class="a " style="left:423px;top:358px;width:1px;height:18px;background:#c0c0c0;"></div>
<div class="a " style="left:496px;top:358px;width:1px;height:18px;background:#c0c0c0;"></div>
<div class="a " style="left:561px;top:358px;width:1px;height:18px;background:#c0c0c0;"></div>
<div class="a " style="left:762px;top:358px;width:1px;height:18px;background:#c0c0c0;"></div>
<div class="a " style="left:913px;top:358px;width:1px;height:18px;background:#c0c0c0;"></div>
<div class="a " style="left:329px;top:360px;width:13px;height:13px;background:#fff;box-sizing:border-box;border:1px solid;border-color:#808080 #fff #fff #808080;"></div>
<div class="a " style="left:330px;top:361px;width:11px;height:11px;box-sizing:border-box;border:1px solid;border-color:#404040 #d4d0c8 #d4d0c8 #404040;"></div>
<svg class="a" style="left:332px;top:363px" width="7" height="7"><path d="M0 2v3l2 2h1l4-4V0L2.5 4.5z" fill="#000"/></svg>
<div class="a t" style="top:359.67px;height:14px;line-height:14px;font-size:12.5px;color:#000;left:366px;transform:scaleX(0.8631);transform-origin:0 0;">06.10.2014</div>
<div class="a t" style="top:359.67px;height:14px;line-height:14px;font-size:12.5px;color:#000;left:524.312px;transform:scaleX(0.8811);transform-origin:0 0;">290,00</div>
<div class="a t" style="top:359.67px;height:14px;line-height:14px;font-size:12.5px;color:#000;left:564.3px;transform:scaleX(0.8706);transform-origin:0 0;">Банк (безналичный расчет)</div>
<div class="a t" style="top:359.67px;height:14px;line-height:14px;font-size:12.5px;color:#000;left:765px;transform:scaleX(0.8866);transform-origin:0 0;">КЛИЕНТ ЛЕНИНА</div>
<div class="a " style="left:325px;top:376px;width:20px;height:17px;background:#ffffe8;"></div>
<div class="a " style="left:325px;top:393px;width:760px;height:1px;background:#c0c0c0;"></div>
<div class="a " style="left:313px;top:393px;width:12px;height:1px;background:#000;"></div>
<div class="a " style="left:345px;top:376px;width:1px;height:18px;background:#c0c0c0;"></div>
<div class="a " style="left:362px;top:376px;width:1px;height:18px;background:#c0c0c0;"></div>
<div class="a " style="left:423px;top:376px;width:1px;height:18px;background:#c0c0c0;"></div>
<div class="a " style="left:496px;top:376px;width:1px;height:18px;background:#c0c0c0;"></div>
<div class="a " style="left:561px;top:376px;width:1px;height:18px;background:#c0c0c0;"></div>
<div class="a " style="left:762px;top:376px;width:1px;height:18px;background:#c0c0c0;"></div>
<div class="a " style="left:913px;top:376px;width:1px;height:18px;background:#c0c0c0;"></div>
<div class="a " style="left:329px;top:378px;width:13px;height:13px;background:#fff;box-sizing:border-box;border:1px solid;border-color:#808080 #fff #fff #808080;"></div>
<div class="a " style="left:330px;top:379px;width:11px;height:11px;box-sizing:border-box;border:1px solid;border-color:#404040 #d4d0c8 #d4d0c8 #404040;"></div>
<svg class="a" style="left:332px;top:381px" width="7" height="7"><path d="M0 2v3l2 2h1l4-4V0L2.5 4.5z" fill="#000"/></svg>
<div class="a t" style="top:377.67px;height:14px;line-height:14px;font-size:12.5px;color:#000;left:366px;transform:scaleX(0.8631);transform-origin:0 0;">06.10.2014</div>
<div class="a t" style="top:377.67px;height:14px;line-height:14px;font-size:12.5px;color:#000;left:525.125px;transform:scaleX(0.8811);transform-origin:0 0;">119,00</div>
<div class="a t" style="top:377.67px;height:14px;line-height:14px;font-size:12.5px;color:#000;left:564.3px;transform:scaleX(0.8706);transform-origin:0 0;">Банк (безналичный расчет)</div>
<div class="a t" style="top:377.67px;height:14px;line-height:14px;font-size:12.5px;color:#000;left:765px;transform:scaleX(0.8718);transform-origin:0 0;">2110000073473</div>
<div class="a " style="left:325px;top:394px;width:20px;height:17px;background:#ffffe8;"></div>
<div class="a " style="left:325px;top:411px;width:760px;height:1px;background:#c0c0c0;"></div>
<div class="a " style="left:313px;top:411px;width:12px;height:1px;background:#000;"></div>
<div class="a " style="left:345px;top:394px;width:1px;height:18px;background:#c0c0c0;"></div>
<div class="a " style="left:362px;top:394px;width:1px;height:18px;background:#c0c0c0;"></div>
<div class="a " style="left:423px;top:394px;width:1px;height:18px;background:#c0c0c0;"></div>
<div class="a " style="left:496px;top:394px;width:1px;height:18px;background:#c0c0c0;"></div>
<div class="a " style="left:561px;top:394px;width:1px;height:18px;background:#c0c0c0;"></div>
<div class="a " style="left:762px;top:394px;width:1px;height:18px;background:#c0c0c0;"></div>
<div class="a " style="left:913px;top:394px;width:1px;height:18px;background:#c0c0c0;"></div>
<div class="a " style="left:329px;top:396px;width:13px;height:13px;background:#fff;box-sizing:border-box;border:1px solid;border-color:#808080 #fff #fff #808080;"></div>
<div class="a " style="left:330px;top:397px;width:11px;height:11px;box-sizing:border-box;border:1px solid;border-color:#404040 #d4d0c8 #d4d0c8 #404040;"></div>
<svg class="a" style="left:332px;top:399px" width="7" height="7"><path d="M0 2v3l2 2h1l4-4V0L2.5 4.5z" fill="#000"/></svg>
<div class="a t" style="top:395.67px;height:14px;line-height:14px;font-size:12.5px;color:#000;left:366px;transform:scaleX(0.8631);transform-origin:0 0;">06.10.2014</div>
<div class="a t" style="top:395.67px;height:14px;line-height:14px;font-size:12.5px;color:#000;left:530.438px;transform:scaleX(0.8811);transform-origin:0 0;">99,00</div>
<div class="a t" style="top:395.67px;height:14px;line-height:14px;font-size:12.5px;color:#000;left:564.3px;transform:scaleX(0.8706);transform-origin:0 0;">Банк (безналичный расчет)</div>
<div class="a t" style="top:395.67px;height:14px;line-height:14px;font-size:12.5px;color:#000;left:765px;transform:scaleX(0.8718);transform-origin:0 0;">2110000010249</div>
<div class="a " style="left:325px;top:412px;width:20px;height:17px;background:#ffffe8;"></div>
<div class="a " style="left:325px;top:429px;width:760px;height:1px;background:#c0c0c0;"></div>
<div class="a " style="left:313px;top:429px;width:12px;height:1px;background:#000;"></div>
<div class="a " style="left:345px;top:412px;width:1px;height:18px;background:#c0c0c0;"></div>
<div class="a " style="left:362px;top:412px;width:1px;height:18px;background:#c0c0c0;"></div>
<div class="a " style="left:423px;top:412px;width:1px;height:18px;background:#c0c0c0;"></div>
<div class="a " style="left:496px;top:412px;width:1px;height:18px;background:#c0c0c0;"></div>
<div class="a " style="left:561px;top:412px;width:1px;height:18px;background:#c0c0c0;"></div>
<div class="a " style="left:762px;top:412px;width:1px;height:18px;background:#c0c0c0;"></div>
<div class="a " style="left:913px;top:412px;width:1px;height:18px;background:#c0c0c0;"></div>
<div class="a " style="left:329px;top:414px;width:13px;height:13px;background:#fff;box-sizing:border-box;border:1px solid;border-color:#808080 #fff #fff #808080;"></div>
<div class="a " style="left:330px;top:415px;width:11px;height:11px;box-sizing:border-box;border:1px solid;border-color:#404040 #d4d0c8 #d4d0c8 #404040;"></div>
<svg class="a" style="left:332px;top:417px" width="7" height="7"><path d="M0 2v3l2 2h1l4-4V0L2.5 4.5z" fill="#000"/></svg>
<div class="a t" style="top:413.67px;height:14px;line-height:14px;font-size:12.5px;color:#000;left:366px;transform:scaleX(0.8631);transform-origin:0 0;">06.10.2014</div>
<div class="a t" style="top:413.67px;height:14px;line-height:14px;font-size:12.5px;color:#000;left:525.125px;transform:scaleX(0.8811);transform-origin:0 0;">119,00</div>
<div class="a t" style="top:413.67px;height:14px;line-height:14px;font-size:12.5px;color:#000;left:564.3px;transform:scaleX(0.8706);transform-origin:0 0;">Банк (безналичный расчет)</div>
<div class="a t" style="top:413.67px;height:14px;line-height:14px;font-size:12.5px;color:#000;left:765px;transform:scaleX(0.8718);transform-origin:0 0;">2110000024376</div>
<div class="a " style="left:325px;top:430px;width:20px;height:17px;background:#ffffe8;"></div>
<div class="a " style="left:325px;top:447px;width:760px;height:1px;background:#c0c0c0;"></div>
<div class="a " style="left:313px;top:447px;width:12px;height:1px;background:#000;"></div>
<div class="a " style="left:345px;top:430px;width:1px;height:18px;background:#c0c0c0;"></div>
<div class="a " style="left:362px;top:430px;width:1px;height:18px;background:#c0c0c0;"></div>
<div class="a " style="left:423px;top:430px;width:1px;height:18px;background:#c0c0c0;"></div>
<div class="a " style="left:496px;top:430px;width:1px;height:18px;background:#c0c0c0;"></div>
<div class="a " style="left:561px;top:430px;width:1px;height:18px;background:#c0c0c0;"></div>
<div class="a " style="left:762px;top:430px;width:1px;height:18px;background:#c0c0c0;"></div>
<div class="a " style="left:913px;top:430px;width:1px;height:18px;background:#c0c0c0;"></div>
<div class="a " style="left:329px;top:432px;width:13px;height:13px;background:#fff;box-sizing:border-box;border:1px solid;border-color:#808080 #fff #fff #808080;"></div>
<div class="a " style="left:330px;top:433px;width:11px;height:11px;box-sizing:border-box;border:1px solid;border-color:#404040 #d4d0c8 #d4d0c8 #404040;"></div>
<svg class="a" style="left:332px;top:435px" width="7" height="7"><path d="M0 2v3l2 2h1l4-4V0L2.5 4.5z" fill="#000"/></svg>
<div class="a t" style="top:431.67px;height:14px;line-height:14px;font-size:12.5px;color:#000;left:366px;transform:scaleX(0.8631);transform-origin:0 0;">06.10.2014</div>
<div class="a t" style="top:431.67px;height:14px;line-height:14px;font-size:12.5px;color:#000;left:524.312px;transform:scaleX(0.8811);transform-origin:0 0;">739,00</div>
<div class="a t" style="top:431.67px;height:14px;line-height:14px;font-size:12.5px;color:#000;left:564.3px;transform:scaleX(0.8706);transform-origin:0 0;">Банк (безналичный расчет)</div>
<div class="a t" style="top:431.67px;height:14px;line-height:14px;font-size:12.5px;color:#000;left:765px;transform:scaleX(0.8866);transform-origin:0 0;">КЛИЕНТ ЛЕНИНА</div>
<div class="a " style="left:325px;top:448px;width:20px;height:17px;background:#ffffe8;"></div>
<div class="a " style="left:325px;top:465px;width:760px;height:1px;background:#c0c0c0;"></div>
<div class="a " style="left:313px;top:465px;width:12px;height:1px;background:#000;"></div>
<div class="a " style="left:345px;top:448px;width:1px;height:18px;background:#c0c0c0;"></div>
<div class="a " style="left:362px;top:448px;width:1px;height:18px;background:#c0c0c0;"></div>
<div class="a " style="left:423px;top:448px;width:1px;height:18px;background:#c0c0c0;"></div>
<div class="a " style="left:496px;top:448px;width:1px;height:18px;background:#c0c0c0;"></div>
<div class="a " style="left:561px;top:448px;width:1px;height:18px;background:#c0c0c0;"></div>
<div class="a " style="left:762px;top:448px;width:1px;height:18px;background:#c0c0c0;"></div>
<div class="a " style="left:913px;top:448px;width:1px;height:18px;background:#c0c0c0;"></div>
<div class="a " style="left:325px;top:448px;width:20px;height:17px;background:#0a246a;box-sizing:border-box;border:1px dotted #e8e8c0;"></div>
<div class="a " style="left:329px;top:450px;width:13px;height:13px;background:#fff;box-sizing:border-box;border:1px solid;border-color:#808080 #fff #fff #808080;"></div>
<div class="a " style="left:330px;top:451px;width:11px;height:11px;box-sizing:border-box;border:1px solid;border-color:#404040 #d4d0c8 #d4d0c8 #404040;"></div>
<div class="a t" style="top:449.67px;height:14px;line-height:14px;font-size:12.5px;color:#000;left:366px;transform:scaleX(0.8631);transform-origin:0 0;">06.10.2014</div>
<div class="a t" style="top:449.67px;height:14px;line-height:14px;font-size:12.5px;color:#000;left:524.312px;transform:scaleX(0.8811);transform-origin:0 0;">149,00</div>
<div class="a t" style="top:449.67px;height:14px;line-height:14px;font-size:12.5px;color:#000;left:564.3px;transform:scaleX(0.8706);transform-origin:0 0;">Банк (безналичный расчет)</div>
<div class="a t" style="top:449.67px;height:14px;line-height:14px;font-size:12.5px;color:#000;left:765px;transform:scaleX(0.8718);transform-origin:0 0;">2110000074517</div>
<div class="a " style="left:325px;top:466px;width:20px;height:17px;background:#ffffe8;"></div>
<div class="a " style="left:325px;top:483px;width:760px;height:1px;background:#c0c0c0;"></div>
<div class="a " style="left:313px;top:483px;width:12px;height:1px;background:#000;"></div>
<div class="a " style="left:345px;top:466px;width:1px;height:18px;background:#c0c0c0;"></div>
<div class="a " style="left:362px;top:466px;width:1px;height:18px;background:#c0c0c0;"></div>
<div class="a " style="left:423px;top:466px;width:1px;height:18px;background:#c0c0c0;"></div>
<div class="a " style="left:496px;top:466px;width:1px;height:18px;background:#c0c0c0;"></div>
<div class="a " style="left:561px;top:466px;width:1px;height:18px;background:#c0c0c0;"></div>
<div class="a " style="left:762px;top:466px;width:1px;height:18px;background:#c0c0c0;"></div>
<div class="a " style="left:913px;top:466px;width:1px;height:18px;background:#c0c0c0;"></div>
<div class="a " style="left:329px;top:468px;width:13px;height:13px;background:#fff;box-sizing:border-box;border:1px solid;border-color:#808080 #fff #fff #808080;"></div>
<div class="a " style="left:330px;top:469px;width:11px;height:11px;box-sizing:border-box;border:1px solid;border-color:#404040 #d4d0c8 #d4d0c8 #404040;"></div>
<div class="a t" style="top:467.67px;height:14px;line-height:14px;font-size:12.5px;color:#000;left:366px;transform:scaleX(0.8631);transform-origin:0 0;">06.10.2014</div>
<div class="a t" style="top:467.67px;height:14px;line-height:14px;font-size:12.5px;color:#000;left:530.438px;transform:scaleX(0.8811);transform-origin:0 0;">99,00</div>
<div class="a t" style="top:467.67px;height:14px;line-height:14px;font-size:12.5px;color:#000;left:564.3px;transform:scaleX(0.8706);transform-origin:0 0;">Банк (безналичный расчет)</div>
<div class="a t" style="top:467.67px;height:14px;line-height:14px;font-size:12.5px;color:#000;left:765px;transform:scaleX(0.8718);transform-origin:0 0;">2110000013837</div>
<div class="a " style="left:316px;top:451px;width:2px;height:1px;background:#000;"></div>
<div class="a " style="left:320px;top:451px;width:2px;height:1px;background:#000;"></div>
<div class="a " style="left:317px;top:452px;width:4px;height:1px;background:#000;"></div>
<div class="a " style="left:318px;top:453px;width:2px;height:7px;background:#000;"></div>
<div class="a " style="left:317px;top:460px;width:4px;height:1px;background:#000;"></div>
<div class="a " style="left:316px;top:461px;width:2px;height:1px;background:#000;"></div>
<div class="a " style="left:320px;top:461px;width:2px;height:1px;background:#000;"></div>
<div class="a " style="left:1085px;top:268px;width:16px;height:437px;background:repeating-conic-gradient(#fff 0% 25%, #d4d0c8 0% 50%) 0 0/2px 2px;"></div>
<div class="a " style="left:1085px;top:268px;width:16px;height:16px;background:#d4d0c8;box-sizing:border-box;border:1px solid;border-color:#d4d0c8 #404040 #404040 #d4d0c8;"></div>
<div class="a " style="left:1086px;top:269px;width:14px;height:14px;box-sizing:border-box;border:1px solid;border-color:#fff #808080 #808080 #fff;"></div>
<div class="a " style="left:1085px;top:458px;width:16px;height:212px;background:#d4d0c8;box-sizing:border-box;border:1px solid;border-color:#d4d0c8 #404040 #404040 #d4d0c8;"></div>
<div class="a " style="left:1086px;top:459px;width:14px;height:210px;box-sizing:border-box;border:1px solid;border-color:#fff #808080 #808080 #fff;"></div>
<div class="a " style="left:1085px;top:689px;width:16px;height:16px;background:#d4d0c8;box-sizing:border-box;border:1px solid;border-color:#d4d0c8 #404040 #404040 #d4d0c8;"></div>
<div class="a " style="left:1086px;top:690px;width:14px;height:14px;box-sizing:border-box;border:1px solid;border-color:#fff #808080 #808080 #fff;"></div>
<svg class="a" style="left:1089px;top:274px" width="7" height="4"><path d="M0 4h7L3.5 0.5z" fill="#000"/></svg>
<svg class="a" style="left:1089px;top:695px" width="7" height="4"><path d="M0 0h7L3.5 3.5z" fill="#000"/></svg>
<div class="a " style="left:313px;top:705px;width:772px;height:16px;background:repeating-conic-gradient(#fff 0% 25%, #d4d0c8 0% 50%) 0 0/2px 2px;"></div>
<div class="a " style="left:313px;top:705px;width:16px;height:16px;background:#d4d0c8;box-sizing:border-box;border:1px solid;border-color:#d4d0c8 #404040 #404040 #d4d0c8;"></div>
<div class="a " style="left:314px;top:706px;width:14px;height:14px;box-sizing:border-box;border:1px solid;border-color:#fff #808080 #808080 #fff;"></div>
<div class="a " style="left:329px;top:705px;width:16px;height:16px;background:#d4d0c8;box-sizing:border-box;border:1px solid;border-color:#d4d0c8 #404040 #404040 #d4d0c8;"></div>
<div class="a " style="left:330px;top:706px;width:14px;height:14px;box-sizing:border-box;border:1px solid;border-color:#fff #808080 #808080 #fff;"></div>
<div class="a " style="left:1069px;top:705px;width:16px;height:16px;background:#d4d0c8;box-sizing:border-box;border:1px solid;border-color:#d4d0c8 #404040 #404040 #d4d0c8;"></div>
<div class="a " style="left:1070px;top:706px;width:14px;height:14px;box-sizing:border-box;border:1px solid;border-color:#fff #808080 #808080 #fff;"></div>
<svg class="a" style="left:318px;top:709px" width="4" height="7"><path d="M4 0v7L0.5 3.5z" fill="#000"/></svg>
<svg class="a" style="left:1075px;top:709px" width="4" height="7"><path d="M0 0v7L3.5 3.5z" fill="#000"/></svg>
<div class="a " style="left:1085px;top:705px;width:16px;height:16px;background:#d4d0c8;"></div>
<div class="a " style="left:902px;top:726px;width:97px;height:25px;background:#000;"></div>
<div class="a " style="left:903px;top:727px;width:95px;height:23px;background:#d4d0c8;box-sizing:border-box;border:1px solid;border-color:#fff #404040 #404040 #fff;"></div>
<div class="a " style="left:904px;top:728px;width:93px;height:21px;box-sizing:border-box;border:1px solid;border-color:#d4d0c8 #808080 #808080 #d4d0c8;"></div>
<div class="a t" style="top:731.67px;height:14px;line-height:14px;font-size:12.5px;color:#000;left:935px;transform:scaleX(0.8370);transform-origin:0 0;">Сохранить</div>
<div class="a " style="left:1006px;top:726px;width:97px;height:25px;background:#d4d0c8;box-sizing:border-box;border:1px solid;border-color:#fff #404040 #404040 #fff;"></div>
<div class="a " style="left:1007px;top:727px;width:95px;height:23px;box-sizing:border-box;border:1px solid;border-color:#d4d0c8 #808080 #808080 #d4d0c8;"></div>
<div class="a t" style="top:731.67px;height:14px;line-height:14px;font-size:12.5px;color:#000;left:1040.5px;transform:scaleX(0.8580);transform-origin:0 0;">Отменить</div>
<svg class="a" style="left:914px;top:731px" width="16" height="16" viewBox="0 0 16 16"><path d="M1.200 9.500L3 7.800 5.800 9.600 13.600 1l.4 1.600L9.500 14.800H4.500z" fill="url(#gChk)" stroke="#1c6c08" stroke-width="1" stroke-linejoin="round"/></svg><svg class="a" style="left:1021px;top:733px" width="13" height="13" viewBox="0 0 13 13"><path d="M2.500 1L6 3.500 9.500 1 11.500 3.500 8.500 6 11 9.500 8.500 11.500 6 8.500 3 11 1 9 3.500 6 1 3z" fill="url(#gX)" stroke="#981828" stroke-width=".9" stroke-linejoin="round"/></svg>
</div>
<div class="a " style="left:8px;top:973px;width:1182px;height:1px;background:#d2d2d2;"></div>
<div class="a " style="left:1190px;top:31px;width:16px;height:943px;background:#f0f0f0;"></div>
<div class="a " style="left:1190px;top:31px;width:1px;height:943px;background:#fff;"></div>
<div class="a " style="left:1191px;top:48px;width:15px;height:794px;background:#cdcdcd;"></div>
<svg class="a" style="left:1195px;top:37px" width="8" height="6"><path d="M0.6 4.8L4 1.4L7.4 4.8" stroke="#505050" stroke-width="1.7" fill="none"/></svg>
<svg class="a" style="left:1194px;top:963px" width="9" height="6"><path d="M0.7 0.7L4.5 4.5L8.3 0.7" stroke="#505050" stroke-width="1.8" fill="none"/></svg>
<div class="a " style="left:8px;top:974px;width:1198px;height:16px;background:#f0f0f0;"></div>
<div class="a " style="left:8px;top:974px;width:1182px;height:1px;background:#fff;"></div>
<div class="a " style="left:1206px;top:31px;width:1px;height:960px;background:#e2f8fe;"></div>
<div class="a " style="left:1207px;top:31px;width:1px;height:961px;background:#5a8c9e;"></div>
<div class="a " style="left:8px;top:990px;width:1199px;height:1px;background:#e2f8fe;"></div>
<div class="a " style="left:7px;top:991px;width:1201px;height:1px;background:#5a8c9e;"></div>
<div class="a " style="left:7px;top:31px;width:1px;height:960px;background:#4f8fa5;"></div>
<div class="a " style="left:25px;top:975px;width:707px;height:15px;background:#cdcdcd;"></div>
<svg class="a" style="left:13px;top:978px" width="6" height="9"><path d="M5.3 0.7L1.5 4.5L5.3 8.3" stroke="#505050" stroke-width="1.8" fill="none"/></svg>
<svg class="a" style="left:1179px;top:978px" width="6" height="9"><path d="M0.7 0.7L4.5 4.5L0.7 8.3" stroke="#505050" stroke-width="1.8" fill="none"/></svg>
<div class="a " style="left:1203px;top:980px;width:2px;height:2px;background:#bfbfbf;"></div>
<div class="a " style="left:1200px;top:983px;width:2px;height:2px;background:#bfbfbf;"></div>
<div class="a " style="left:1203px;top:983px;width:2px;height:2px;background:#bfbfbf;"></div>
<div class="a " style="left:1197px;top:986px;width:2px;height:2px;background:#bfbfbf;"></div>
<div class="a " style="left:1200px;top:986px;width:2px;height:2px;background:#bfbfbf;"></div>
<div class="a " style="left:1203px;top:986px;width:2px;height:2px;background:#bfbfbf;"></div>
</body></html>
